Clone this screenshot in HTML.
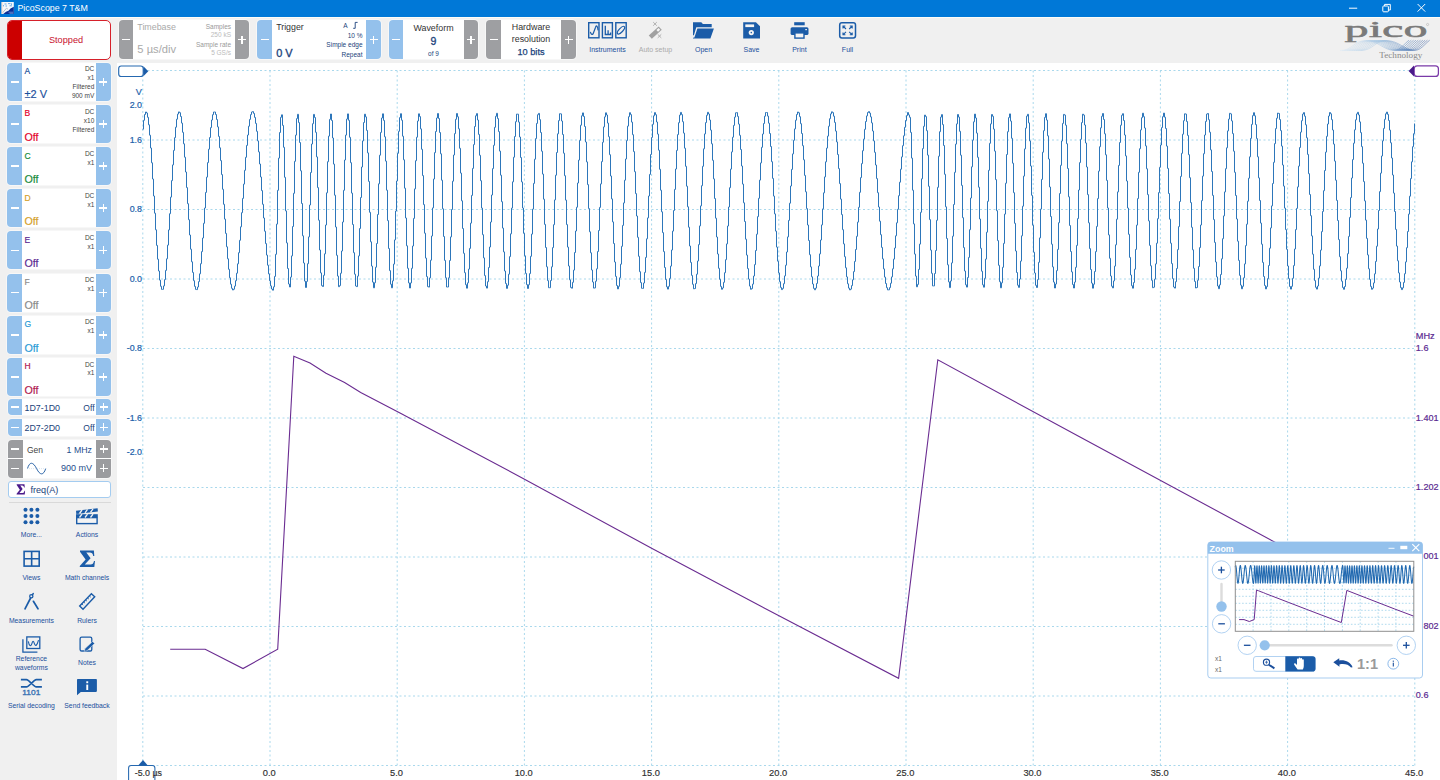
<!DOCTYPE html>
<html><head><meta charset="utf-8"><title>PicoScope 7 T&amp;M</title>
<style>
html,body{margin:0;padding:0;}
body{width:1440px;height:780px;overflow:hidden;background:#fff;position:relative;font-family:"Liberation Sans",sans-serif;}
.abs{position:absolute;}
.t{position:absolute;white-space:nowrap;line-height:1;}
.tc{transform:translateX(-50%);}
.tr{transform:translateX(-100%);}
#titlebar{left:0;top:0;width:1440px;height:17px;background:#0078d7;}
#toolbar{left:0;top:17px;width:1440px;height:46px;background:#f0f0f0;}
#leftbar{left:0;top:63px;width:117px;height:717px;background:#f0f0f0;}
.pn{position:absolute;background:#fff;border-radius:4px;overflow:hidden;box-shadow:0 0 0 0.8px #f9f9f9;}
.bt{position:absolute;top:0;bottom:0;}
.bl{background:#94c1ec;}
.gr{background:#9e9fa2;}
.mi,.pl{position:absolute;background:#fff;}
svg{position:absolute;left:0;top:0;}
</style></head><body>
<div id="titlebar" class="abs"></div>
<div id="toolbar" class="abs"></div><div class="abs" style="left:0;top:17px;width:1440px;height:1.4px;background:#fcfcf8"></div>
<div id="leftbar" class="abs"></div>
<div class="abs" style="left:7.2px;top:19.8px;width:102px;height:38px;border:1px solid #d6202a;border-radius:5px;background:#fff;overflow:hidden;box-sizing:content-box"><div class="abs" style="left:0;top:0;width:14px;height:38px;background:#cc0000"></div></div>
<div class="pn" style="left:118.5px;top:20.1px;width:130.5px;height:39.1px;"><div class="bt gr" style="left:0;width:14.5px"><div class="mi" style="left:3.2px;top:18.8px;width:8px;height:1.6px"></div></div><div class="bt gr" style="right:0;width:14.5px"><div class="mi" style="left:3.2px;top:18.8px;width:8px;height:1.6px"></div><div class="pl" style="left:6.5px;top:15.6px;width:1.6px;height:8px"></div></div></div>
<div class="pn" style="left:257.0px;top:20.1px;width:124.0px;height:39.1px;"><div class="bt bl" style="left:0;width:15.0px"><div class="mi" style="left:3.5px;top:18.8px;width:8px;height:1.6px"></div></div><div class="bt bl" style="right:0;width:15.0px"><div class="mi" style="left:3.5px;top:18.8px;width:8px;height:1.6px"></div><div class="pl" style="left:6.7px;top:15.6px;width:1.6px;height:8px"></div></div></div>
<div class="pn" style="left:388.5px;top:20.1px;width:89.5px;height:39.1px;"><div class="bt bl" style="left:0;width:14.5px"><div class="mi" style="left:3.2px;top:18.8px;width:8px;height:1.6px"></div></div><div class="bt gr" style="right:0;width:14.0px"><div class="mi" style="left:3.0px;top:18.8px;width:8px;height:1.6px"></div><div class="pl" style="left:6.2px;top:15.6px;width:1.6px;height:8px"></div></div></div>
<div class="pn" style="left:486.0px;top:20.1px;width:90.0px;height:39.1px;"><div class="bt gr" style="left:0;width:15.0px"><div class="mi" style="left:3.5px;top:18.8px;width:8px;height:1.6px"></div></div><div class="bt gr" style="right:0;width:15.0px"><div class="mi" style="left:3.5px;top:18.8px;width:8px;height:1.6px"></div><div class="pl" style="left:6.7px;top:15.6px;width:1.6px;height:8px"></div></div></div>
<div class="pn" style="left:7.3px;top:62.8px;width:103.7px;height:38.1px;"><div class="bt bl" style="left:0;width:14.6px"><div class="mi" style="left:3.3px;top:18.3px;width:8px;height:1.6px"></div></div><div class="bt bl" style="right:0;width:15.0px"><div class="mi" style="left:3.5px;top:18.3px;width:8px;height:1.6px"></div><div class="pl" style="left:6.7px;top:15.1px;width:1.6px;height:8px"></div></div></div>
<div class="pn" style="left:7.3px;top:104.9px;width:103.7px;height:38.1px;"><div class="bt bl" style="left:0;width:14.6px"><div class="mi" style="left:3.3px;top:18.2px;width:8px;height:1.6px"></div></div><div class="bt bl" style="right:0;width:15.0px"><div class="mi" style="left:3.5px;top:18.2px;width:8px;height:1.6px"></div><div class="pl" style="left:6.7px;top:15.0px;width:1.6px;height:8px"></div></div></div>
<div class="pn" style="left:7.3px;top:147.1px;width:103.7px;height:38.1px;"><div class="bt bl" style="left:0;width:14.6px"><div class="mi" style="left:3.3px;top:18.2px;width:8px;height:1.6px"></div></div><div class="bt bl" style="right:0;width:15.0px"><div class="mi" style="left:3.5px;top:18.2px;width:8px;height:1.6px"></div><div class="pl" style="left:6.7px;top:15.0px;width:1.6px;height:8px"></div></div></div>
<div class="pn" style="left:7.3px;top:189.2px;width:103.7px;height:38.1px;"><div class="bt bl" style="left:0;width:14.6px"><div class="mi" style="left:3.3px;top:18.2px;width:8px;height:1.6px"></div></div><div class="bt bl" style="right:0;width:15.0px"><div class="mi" style="left:3.5px;top:18.2px;width:8px;height:1.6px"></div><div class="pl" style="left:6.7px;top:15.0px;width:1.6px;height:8px"></div></div></div>
<div class="pn" style="left:7.3px;top:231.4px;width:103.7px;height:38.1px;"><div class="bt bl" style="left:0;width:14.6px"><div class="mi" style="left:3.3px;top:18.3px;width:8px;height:1.6px"></div></div><div class="bt bl" style="right:0;width:15.0px"><div class="mi" style="left:3.5px;top:18.3px;width:8px;height:1.6px"></div><div class="pl" style="left:6.7px;top:15.1px;width:1.6px;height:8px"></div></div></div>
<div class="pn" style="left:7.3px;top:273.6px;width:103.7px;height:38.1px;"><div class="bt bl" style="left:0;width:14.6px"><div class="mi" style="left:3.3px;top:18.3px;width:8px;height:1.6px"></div></div><div class="bt bl" style="right:0;width:15.0px"><div class="mi" style="left:3.5px;top:18.3px;width:8px;height:1.6px"></div><div class="pl" style="left:6.7px;top:15.1px;width:1.6px;height:8px"></div></div></div>
<div class="pn" style="left:7.3px;top:315.7px;width:103.7px;height:38.1px;"><div class="bt bl" style="left:0;width:14.6px"><div class="mi" style="left:3.3px;top:18.3px;width:8px;height:1.6px"></div></div><div class="bt bl" style="right:0;width:15.0px"><div class="mi" style="left:3.5px;top:18.3px;width:8px;height:1.6px"></div><div class="pl" style="left:6.7px;top:15.1px;width:1.6px;height:8px"></div></div></div>
<div class="pn" style="left:7.3px;top:357.9px;width:103.7px;height:38.1px;"><div class="bt bl" style="left:0;width:14.6px"><div class="mi" style="left:3.3px;top:18.3px;width:8px;height:1.6px"></div></div><div class="bt bl" style="right:0;width:15.0px"><div class="mi" style="left:3.5px;top:18.3px;width:8px;height:1.6px"></div><div class="pl" style="left:6.7px;top:15.1px;width:1.6px;height:8px"></div></div></div>
<div class="pn" style="left:7.5px;top:398.9px;width:103.5px;height:16.5px;"><div class="bt bl" style="left:0;width:14.6px"><div class="mi" style="left:3.3px;top:7.5px;width:8px;height:1.6px"></div></div><div class="bt bl" style="right:0;width:15.0px"><div class="mi" style="left:3.5px;top:7.5px;width:8px;height:1.6px"></div><div class="pl" style="left:6.7px;top:4.2px;width:1.6px;height:8px"></div></div></div>
<div class="pn" style="left:7.5px;top:419.2px;width:103.5px;height:16.5px;"><div class="bt bl" style="left:0;width:14.6px"><div class="mi" style="left:3.3px;top:7.5px;width:8px;height:1.6px"></div></div><div class="bt bl" style="right:0;width:15.0px"><div class="mi" style="left:3.5px;top:7.5px;width:8px;height:1.6px"></div><div class="pl" style="left:6.7px;top:4.2px;width:1.6px;height:8px"></div></div></div>
<div class="pn" style="left:7.5px;top:439.5px;width:103.5px;height:38.5px;"></div>
<div class="abs" style="left:7.5px;top:439.5px;width:15px;height:18.7px;background:#9b9c9f;border-radius:4px 0 0 0"><div class="mi" style="left:3.5px;top:8.5px;width:8px;height:1.6px"></div></div>
<div class="abs" style="left:7.5px;top:458.8px;width:15px;height:19.2px;background:#9b9c9f;border-radius:0 0 0 4px"><div class="mi" style="left:3.5px;top:8.8px;width:8px;height:1.6px"></div></div>
<div class="abs" style="left:96px;top:439.5px;width:15px;height:18.7px;background:#9b9c9f;border-radius:0 4px 0 0"><div class="mi" style="left:3.5px;top:8.5px;width:8px;height:1.6px"></div><div class="pl" style="left:6.7px;top:5.3px;width:1.6px;height:8px"></div></div>
<div class="abs" style="left:96px;top:458.8px;width:15px;height:19.2px;background:#9b9c9f;border-radius:0 0 4px 0"><div class="mi" style="left:3.5px;top:8.8px;width:8px;height:1.6px"></div><div class="pl" style="left:6.7px;top:5.6px;width:1.6px;height:8px"></div></div>
<div class="abs" style="left:7.5px;top:481.2px;width:101.5px;height:14.8px;border:1px solid #a4ccf0;border-radius:3px;background:#fff"></div>
<div class="abs" style="left:9px;top:502px;width:102px;height:1px;background:#d9d9d9"></div>
<svg width="1440" height="780" viewBox="0 0 1440 780">

<g id="plotcore">
 <g stroke="#a9d8ec" stroke-width="1" stroke-dasharray="2 2.5" fill="none"><line x1="142.8" y1="70.5" x2="142.8" y2="765.5"/><line x1="270.0" y1="70.5" x2="270.0" y2="765.5"/><line x1="397.2" y1="70.5" x2="397.2" y2="765.5"/><line x1="524.4" y1="70.5" x2="524.4" y2="765.5"/><line x1="651.6" y1="70.5" x2="651.6" y2="765.5"/><line x1="778.8" y1="70.5" x2="778.8" y2="765.5"/><line x1="906.0" y1="70.5" x2="906.0" y2="765.5"/><line x1="1033.2" y1="70.5" x2="1033.2" y2="765.5"/><line x1="1160.4" y1="70.5" x2="1160.4" y2="765.5"/><line x1="1287.6" y1="70.5" x2="1287.6" y2="765.5"/><line x1="1414.8" y1="70.5" x2="1414.8" y2="765.5"/><line x1="143" y1="70.5" x2="1415" y2="70.5"/><line x1="143" y1="140.0" x2="1415" y2="140.0"/><line x1="143" y1="209.5" x2="1415" y2="209.5"/><line x1="143" y1="279.0" x2="1415" y2="279.0"/><line x1="143" y1="348.5" x2="1415" y2="348.5"/><line x1="143" y1="418.0" x2="1415" y2="418.0"/><line x1="143" y1="487.5" x2="1415" y2="487.5"/><line x1="143" y1="557.0" x2="1415" y2="557.0"/><line x1="143" y1="626.5" x2="1415" y2="626.5"/><line x1="143" y1="696.0" x2="1415" y2="696.0"/><line x1="143" y1="765.5" x2="1415" y2="765.5"/></g>
 <path d="M142.5 129.2H143.5 V120.3H144.5 V114.5H145.5 V112.0H146.5 V113.0H147.5 V117.3H148.5 V124.8H149.5 V135.2H150.5 V148.0H151.5 V162.8H152.5 V179.0H153.5 V196.0H154.5 V213.2H155.5 V229.8H156.5 V245.4H157.5 V259.2H158.5 V271.0H159.5 V280.1H160.5 V286.3H161.5 V289.4H162.5 V289.3H163.5 V285.9H164.5 V279.6H165.5 V270.4H166.5 V258.8H167.5 V245.1H168.5 V229.9H169.5 V213.7H170.5 V197.1H171.5 V180.6H172.5 V164.9H173.5 V150.4H174.5 V137.7H175.5 V127.2H176.5 V119.2H177.5 V114.1H178.5 V111.9H179.5 V112.7H180.5 V116.5H181.5 V123.1H182.5 V132.3H183.5 V143.8H184.5 V157.2H185.5 V172.0H186.5 V187.6H187.5 V203.7H188.5 V219.7H189.5 V235.0H190.5 V249.2H191.5 V261.8H192.5 V272.4H193.5 V280.7H194.5 V286.4H195.5 V289.4H196.5 V289.6H197.5 V287.0H198.5 V281.6H199.5 V273.8H200.5 V263.7H201.5 V251.6H202.5 V238.0H203.5 V223.3H204.5 V208.0H205.5 V192.4H206.5 V177.1H207.5 V162.6H208.5 V149.2H209.5 V137.5H210.5 V127.6H211.5 V120.0H212.5 V114.7H213.5 V112.0H214.5 V112.0H215.5 V114.5H216.5 V119.5H217.5 V126.9H218.5 V136.4H219.5 V147.8H220.5 V160.6H221.5 V174.6H222.5 V189.3H223.5 V204.3H224.5 V219.1H225.5 V233.4H226.5 V246.8H227.5 V258.8H228.5 V269.3H229.5 V277.8H230.5 V284.2H231.5 V288.3H232.5 V290.0H233.5 V289.2H234.5 V286.1H235.5 V280.7H236.5 V273.2H237.5 V263.8H238.5 V252.7H239.5 V240.3H240.5 V226.8H241.5 V212.7H242.5 V198.4H243.5 V184.1H244.5 V170.3H245.5 V157.3H246.5 V145.4H247.5 V135.0H248.5 V126.2H249.5 V119.4H250.5 V114.6H251.5 V112.0H252.5 V111.6H253.5 V113.4H254.5 V117.4H255.5 V123.4H256.5 V131.3H257.5 V140.9H258.5 V151.9H259.5 V164.0H260.5 V177.0H261.5 V190.6H262.5 V204.3H263.5 V218.0H264.5 V231.2H265.5 V243.6H266.5 V255.1H267.5 V265.2H268.5 V273.9H269.5 V280.8H270.5 V285.9H271.5 V289.0H272.5 V290.2H273.5 V286.8H274.5 V276.4H275.5 V254.3H276.5 V224.1H277.5 V190.3H278.5 V158.1H279.5 V132.5H280.5 V117.3H281.5 V114.8H282.5 V125.4H283.5 V147.3H284.5 V177.3H285.5 V210.9H286.5 V242.9H287.5 V268.5H288.5 V284.0H289.5 V287.0H290.5 V277.1H291.5 V255.9H292.5 V226.5H293.5 V193.3H294.5 V161.3H295.5 V135.1H296.5 V118.6H297.5 V114.3H298.5 V122.6H299.5 V142.5H300.5 V170.8H301.5 V203.5H302.5 V235.8H303.5 V263.0H304.5 V281.1H305.5 V287.5H306.5 V281.4H307.5 V263.7H308.5 V236.9H309.5 V205.0H310.5 V172.5H311.5 V144.0H312.5 V123.7H313.5 V114.4H314.5 V117.5H315.5 V132.3H316.5 V156.9H317.5 V187.6H318.5 V220.2H319.5 V250.0H320.5 V272.9H321.5 V285.6H322.5 V286.5H323.5 V275.3H324.5 V253.8H325.5 V225.0H326.5 V192.8H327.5 V161.7H328.5 V136.1H329.5 V119.4H330.5 V114.0H331.5 V120.5H332.5 V138.0H333.5 V164.1H334.5 V195.2H335.5 V227.0H336.5 V255.3H337.5 V276.1H338.5 V286.7H339.5 V285.6H340.5 V273.2H341.5 V251.0H342.5 V222.0H343.5 V190.3H344.5 V160.0H345.5 V135.1H346.5 V119.1H347.5 V113.9H348.5 V120.3H349.5 V137.3H350.5 V162.7H351.5 V193.1H352.5 V224.5H353.5 V252.7H354.5 V274.2H355.5 V286.0H356.5 V286.6H357.5 V276.1H358.5 V255.9H359.5 V228.5H360.5 V197.5H361.5 V167.0H362.5 V140.9H363.5 V122.5H364.5 V114.2H365.5 V116.9H366.5 V130.4H367.5 V152.9H368.5 V181.4H369.5 V212.3H370.5 V241.8H371.5 V266.1H372.5 V282.1H373.5 V287.8H374.5 V282.7H375.5 V267.2H376.5 V243.5H377.5 V214.5H378.5 V183.8H379.5 V155.2H380.5 V132.4H381.5 V118.0H382.5 V113.8H383.5 V120.4H384.5 V136.8H385.5 V161.1H386.5 V190.2H387.5 V220.6H388.5 V248.5H389.5 V270.6H390.5 V284.2H391.5 V287.8H392.5 V280.8H393.5 V264.1H394.5 V239.9H395.5 V211.0H396.5 V181.0H397.5 V153.3H398.5 V131.3H399.5 V117.6H400.5 V113.7H401.5 V120.2H402.5 V136.2H403.5 V159.8H404.5 V188.2H405.5 V218.0H406.5 V245.8H407.5 V268.3H408.5 V282.9H409.5 V288.0H410.5 V282.9H411.5 V268.3H412.5 V246.0H413.5 V218.4H414.5 V188.9H415.5 V160.7H416.5 V137.2H417.5 V121.0H418.5 V113.8H419.5 V116.6H420.5 V128.9H421.5 V149.3H422.5 V175.6H423.5 V204.6H424.5 V233.2H425.5 V258.1H426.5 V276.6H427.5 V286.6H428.5 V287.1H429.5 V277.9H430.5 V260.2H431.5 V236.0H432.5 V207.9H433.5 V179.0H434.5 V152.6H435.5 V131.5H436.5 V118.0H437.5 V113.5H438.5 V118.5H439.5 V132.5H440.5 V153.8H441.5 V180.2H442.5 V208.8H443.5 V236.5H444.5 V260.4H445.5 V277.8H446.5 V287.0H447.5 V287.0H448.5 V277.8H449.5 V260.5H450.5 V236.9H451.5 V209.5H452.5 V181.2H453.5 V155.0H454.5 V133.6H455.5 V119.3H456.5 V113.5H457.5 V116.8H458.5 V128.8H459.5 V148.3H460.5 V173.1H461.5 V200.8H462.5 V228.5H463.5 V253.3H464.5 V272.7H465.5 V284.7H466.5 V288.2H467.5 V282.8H468.5 V269.1H469.5 V248.4H470.5 V223.1H471.5 V195.4H472.5 V168.4H473.5 V144.6H474.5 V126.5H475.5 V115.8H476.5 V113.6H477.5 V120.0H478.5 V134.4H479.5 V155.3H480.5 V180.7H481.5 V208.1H482.5 V234.7H483.5 V257.9H484.5 V275.6H485.5 V286.0H486.5 V288.1H487.5 V281.7H488.5 V267.5H489.5 V247.0H490.5 V222.0H491.5 V195.0H492.5 V168.6H493.5 V145.3H494.5 V127.3H495.5 V116.3H496.5 V113.3H497.5 V118.6H498.5 V131.6H499.5 V151.1H500.5 V175.2H501.5 V201.7H502.5 V228.1H503.5 V251.9H504.5 V271.0H505.5 V283.5H506.5 V288.4H507.5 V285.2H508.5 V274.2H509.5 V256.6H510.5 V233.8H511.5 V208.1H512.5 V181.8H513.5 V157.2H514.5 V136.5H515.5 V121.7H516.5 V114.1H517.5 V114.2H518.5 V122.1H519.5 V137.0H520.5 V157.5H521.5 V181.9H522.5 V208.0H523.5 V233.3H524.5 V255.8H525.5 V273.4H526.5 V284.6H527.5 V288.5H528.5 V284.7H529.5 V273.6H530.5 V256.3H531.5 V234.1H532.5 V209.1H533.5 V183.4H534.5 V159.2H535.5 V138.6H536.5 V123.4H537.5 V114.7H538.5 V113.4H539.5 V119.6H540.5 V132.5H541.5 V151.2H542.5 V174.1H543.5 V199.2H544.5 V224.4H545.5 V247.5H546.5 V266.8H547.5 V280.6H548.5 V287.7H549.5 V287.7H550.5 V280.5H551.5 V266.8H552.5 V247.6H553.5 V224.7H554.5 V199.9H555.5 V175.2H556.5 V152.5H557.5 V133.8H558.5 V120.6H559.5 V113.7H560.5 V113.9H561.5 V121.0H562.5 V134.5H563.5 V153.2H564.5 V175.7H565.5 V200.1H566.5 V224.6H567.5 V247.1H568.5 V266.0H569.5 V279.8H570.5 V287.4H571.5 V288.2H572.5 V282.3H573.5 V270.1H574.5 V252.5H575.5 V231.0H576.5 V207.2H577.5 V183.0H578.5 V160.1H579.5 V140.4H580.5 V125.2H581.5 V115.8H582.5 V112.9H583.5 V116.5H584.5 V126.5H585.5 V142.0H586.5 V161.9H587.5 V184.6H588.5 V208.5H589.5 V231.8H590.5 V252.8H591.5 V270.0H592.5 V282.0H593.5 V288.1H594.5 V287.9H595.5 V281.2H596.5 V268.8H597.5 V251.5H598.5 V230.5H599.5 V207.4H600.5 V183.9H601.5 V161.6H602.5 V142.2H603.5 V126.9H604.5 V116.9H605.5 V112.8H606.5 V115.0H607.5 V123.1H608.5 V136.7H609.5 V154.7H610.5 V176.0H611.5 V198.9H612.5 V221.9H613.5 V243.5H614.5 V262.0H615.5 V276.4H616.5 V285.5H617.5 V288.9H618.5 V286.3H619.5 V277.8H620.5 V264.2H621.5 V246.3H622.5 V225.4H623.5 V202.9H624.5 V180.2H625.5 V159.0H626.5 V140.6H627.5 V126.1H628.5 V116.7H629.5 V112.7H630.5 V114.6H631.5 V122.1H632.5 V134.7H633.5 V151.6H634.5 V171.7H635.5 V193.6H636.5 V216.0H637.5 V237.3H638.5 V256.3H639.5 V271.7H640.5 V282.6H641.5 V288.3H642.5 V288.4H643.5 V283.0H644.5 V272.4H645.5 V257.4H646.5 V238.8H647.5 V217.9H648.5 V196.0H649.5 V174.4H650.5 V154.5H651.5 V137.4H652.5 V124.3H653.5 V115.8H654.5 V112.6H655.5 V114.7H656.5 V122.0H657.5 V134.1H658.5 V150.2H659.5 V169.3H660.5 V190.2H661.5 V211.8H662.5 V232.6H663.5 V251.6H664.5 V267.5H665.5 V279.5H666.5 V286.8H667.5 V289.1H668.5 V286.3H669.5 V278.4H670.5 V266.1H671.5 V250.0H672.5 V231.1H673.5 V210.5H674.5 V189.4H675.5 V169.0H676.5 V150.4H677.5 V134.6H678.5 V122.7H679.5 V115.1H680.5 V112.4H681.5 V114.6H682.5 V121.7H683.5 V133.1H684.5 V148.2H685.5 V166.3H686.5 V186.2H687.5 V206.8H688.5 V227.2H689.5 V246.0H690.5 V262.4H691.5 V275.4H692.5 V284.3H693.5 V288.8H694.5 V288.5H695.5 V283.6H696.5 V274.2H697.5 V261.0H698.5 V244.6H699.5 V225.9H700.5 V205.9H701.5 V185.7H702.5 V166.3H703.5 V148.8H704.5 V133.9H705.5 V122.6H706.5 V115.3H707.5 V112.3H708.5 V114.0H709.5 V120.0H710.5 V130.1H711.5 V143.8H712.5 V160.3H713.5 V178.9H714.5 V198.5H715.5 V218.2H716.5 V237.0H717.5 V254.0H718.5 V268.3H719.5 V279.3H720.5 V286.4H721.5 V289.3H722.5 V287.9H723.5 V282.3H724.5 V272.7H725.5 V259.7H726.5 V243.9H727.5 V226.0H728.5 V207.0H729.5 V187.7H730.5 V169.1H731.5 V151.9H732.5 V137.2H733.5 V125.4H734.5 V117.1H735.5 V112.8H736.5 V112.6H737.5 V116.4H738.5 V124.1H739.5 V135.3H740.5 V149.5H741.5 V166.0H742.5 V184.1H743.5 V202.8H744.5 V221.5H745.5 V239.2H746.5 V255.1H747.5 V268.6H748.5 V279.1H749.5 V286.1H750.5 V289.3H751.5 V288.6H752.5 V284.1H753.5 V276.0H754.5 V264.6H755.5 V250.5H756.5 V234.2H757.5 V216.6H758.5 V198.3H759.5 V180.1H760.5 V162.9H761.5 V147.3H762.5 V134.0H763.5 V123.5H764.5 V116.2H765.5 V112.5H766.5 V112.5H767.5 V116.1H768.5 V123.2H769.5 V133.5H770.5 V146.5H771.5 V161.7H772.5 V178.4H773.5 V196.1H774.5 V213.9H775.5 V231.1H776.5 V247.1H777.5 V261.2H778.5 V272.9H779.5 V281.7H780.5 V287.4H781.5 V289.6H782.5 V288.4H783.5 V283.7H784.5 V275.9H785.5 V265.2H786.5 V252.0H787.5 V236.9H788.5 V220.4H789.5 V203.2H790.5 V186.0H791.5 V169.4H792.5 V153.9H793.5 V140.3H794.5 V128.9H795.5 V120.2H796.5 V114.5H797.5 V112.0H798.5 V112.8H799.5 V116.7H800.5 V123.7H801.5 V133.5H802.5 V145.7H803.5 V159.8H804.5 V175.4H805.5 V191.8H806.5 V208.6H807.5 V225.0H808.5 V240.5H809.5 V254.7H810.5 V266.9H811.5 V276.8H812.5 V284.0H813.5 V288.4H814.5 V289.8H815.5 V288.1H816.5 V283.4H817.5 V276.0H818.5 V266.0H819.5 V253.9H820.5 V240.0H821.5 V224.9H822.5 V208.9H823.5 V192.8H824.5 V176.9H825.5 V161.8H826.5 V148.1H827.5 V136.1H828.5 V126.2H829.5 V118.7H830.5 V113.9H831.5 V111.8H832.5 V112.6H833.5 V116.2H834.5 V122.4H835.5 V131.1H836.5 V141.9H837.5 V154.5H838.5 V168.6H839.5 V183.6H840.5 V199.1H841.5 V214.6H842.5 V229.7H843.5 V243.9H844.5 V256.7H845.5 V267.8H846.5 V276.9H847.5 V283.8H848.5 V288.1H849.5 V289.9H850.5 V289.1H851.5 V285.6H852.5 V279.8H853.5 V271.6H854.5 V261.4H855.5 V249.5H856.5 V236.3H857.5 V222.1H858.5 V207.3H859.5 V192.3H860.5 V177.6H861.5 V163.6H862.5 V150.7H863.5 V139.1H864.5 V129.3H865.5 V121.5H866.5 V115.9H867.5 V112.5H868.5 V111.6H869.5 V113.1H870.5 V116.9H871.5 V122.9H872.5 V131.0H873.5 V140.9H874.5 V152.3H875.5 V165.0H876.5 V178.6H877.5 V192.7H878.5 V207.0H879.5 V221.2H880.5 V234.7H881.5 V247.4H882.5 V258.9H883.5 V268.9H884.5 V277.1H885.5 V283.5H886.5 V287.7H887.5 V289.9H888.5 V289.8H889.5 V287.6H890.5 V283.2H891.5 V276.9H892.5 V268.8H893.5 V259.1H894.5 V248.0H895.5 V235.8H896.5 V222.8H897.5 V209.3H898.5 V195.7H899.5 V182.2H900.5 V169.2H901.5 V156.9H902.5 V145.7H903.5 V135.8H904.5 V127.3H905.5 V120.5H906.5 V115.6H907.5 V112.5H908.5 V114.9H909.5 V117.3H910.5 V132.4H911.5 V158.1H912.5 V190.2H913.5 V223.9H914.5 V254.1H915.5 V276.1H916.5 V286.8H917.5 V284.4H918.5 V269.4H919.5 V244.1H920.5 V212.3H921.5 V178.8H922.5 V148.6H923.5 V126.3H924.5 V115.1H925.5 V116.6H926.5 V130.7H927.5 V155.1H928.5 V186.3H929.5 V219.6H930.5 V250.1H931.5 V273.3H932.5 V285.9H933.5 V285.9H934.5 V273.5H935.5 V250.5H936.5 V220.3H937.5 V187.3H938.5 V156.2H939.5 V131.7H940.5 V117.1H941.5 V114.6H942.5 V124.6H943.5 V145.5H944.5 V174.3H945.5 V206.8H946.5 V238.5H947.5 V264.8H948.5 V281.9H949.5 V287.6H950.5 V280.9H951.5 V262.9H952.5 V236.2H953.5 V204.5H954.5 V172.3H955.5 V144.1H956.5 V123.9H957.5 V114.5H958.5 V117.1H959.5 V131.3H960.5 V155.2H961.5 V185.4H962.5 V217.7H963.5 V247.6H964.5 V271.0H965.5 V284.8H966.5 V287.1H967.5 V277.5H968.5 V257.4H969.5 V229.7H970.5 V198.0H971.5 V166.8H972.5 V140.2H973.5 V121.8H974.5 V114.1H975.5 V118.0H976.5 V133.1H977.5 V157.3H978.5 V187.2H979.5 V219.0H980.5 V248.3H981.5 V271.2H982.5 V284.8H983.5 V287.2H984.5 V278.3H985.5 V259.1H986.5 V232.2H987.5 V201.3H988.5 V170.3H989.5 V143.3H990.5 V123.9H991.5 V114.5H992.5 V116.3H993.5 V129.1H994.5 V151.1H995.5 V179.6H996.5 V210.7H997.5 V240.6H998.5 V265.3H999.5 V281.7H1000.5 V287.8H1001.5 V282.8H1002.5 V267.3H1003.5 V243.4H1004.5 V214.1H1005.5 V183.2H1006.5 V154.5H1007.5 V131.7H1008.5 V117.6H1009.5 V113.9H1010.5 V121.1H1011.5 V138.3H1012.5 V163.2H1013.5 V192.7H1014.5 V223.3H1015.5 V251.0H1016.5 V272.5H1017.5 V285.2H1018.5 V287.4H1019.5 V279.0H1020.5 V261.1H1021.5 V235.8H1022.5 V206.2H1023.5 V176.1H1024.5 V148.9H1025.5 V128.1H1026.5 V116.1H1027.5 V114.3H1028.5 V122.9H1029.5 V140.9H1030.5 V166.0H1031.5 V195.3H1032.5 V225.2H1033.5 V252.2H1034.5 V273.0H1035.5 V285.3H1036.5 V287.5H1037.5 V279.6H1038.5 V262.3H1039.5 V237.9H1040.5 V209.1H1041.5 V179.4H1042.5 V152.2H1043.5 V130.7H1044.5 V117.4H1045.5 V113.7H1046.5 V120.1H1047.5 V135.8H1048.5 V159.0H1049.5 V187.0H1050.5 V216.5H1051.5 V244.2H1052.5 V266.9H1053.5 V282.1H1054.5 V288.0H1055.5 V284.0H1056.5 V270.6H1057.5 V249.4H1058.5 V222.7H1059.5 V193.5H1060.5 V165.3H1061.5 V141.0H1062.5 V123.4H1063.5 V114.4H1064.5 V115.1H1065.5 V125.2H1066.5 V143.7H1067.5 V168.5H1068.5 V196.8H1069.5 V225.5H1070.5 V251.5H1071.5 V271.9H1072.5 V284.5H1073.5 V288.0H1074.5 V282.1H1075.5 V267.3H1076.5 V245.4H1077.5 V218.6H1078.5 V190.0H1079.5 V162.6H1080.5 V139.3H1081.5 V122.6H1082.5 V114.2H1083.5 V115.1H1084.5 V125.0H1085.5 V143.0H1086.5 V167.0H1087.5 V194.6H1088.5 V222.8H1089.5 V248.6H1090.5 V269.5H1091.5 V283.1H1092.5 V288.2H1093.5 V284.2H1094.5 V271.5H1095.5 V251.6H1096.5 V226.4H1097.5 V198.6H1098.5 V171.1H1099.5 V146.7H1100.5 V127.8H1101.5 V116.3H1102.5 V113.5H1103.5 V119.5H1104.5 V133.8H1105.5 V154.8H1106.5 V180.4H1107.5 V208.0H1108.5 V234.9H1109.5 V258.3H1110.5 V276.0H1111.5 V286.2H1112.5 V287.9H1113.5 V280.9H1114.5 V266.1H1115.5 V244.8H1116.5 V219.2H1117.5 V191.9H1118.5 V165.4H1119.5 V142.5H1120.5 V125.2H1121.5 V115.3H1122.5 V113.7H1123.5 V120.5H1124.5 V135.0H1125.5 V155.9H1126.5 V181.0H1127.5 V208.0H1128.5 V234.3H1129.5 V257.4H1130.5 V275.0H1131.5 V285.7H1132.5 V288.2H1133.5 V282.5H1134.5 V269.2H1135.5 V249.4H1136.5 V225.1H1137.5 V198.6H1138.5 V172.3H1139.5 V148.7H1140.5 V129.9H1141.5 V117.7H1142.5 V113.2H1143.5 V116.7H1144.5 V128.0H1145.5 V145.9H1146.5 V168.8H1147.5 V194.6H1148.5 V220.9H1149.5 V245.4H1150.5 V265.8H1151.5 V280.3H1152.5 V287.7H1153.5 V287.2H1154.5 V279.1H1155.5 V263.9H1156.5 V243.2H1157.5 V218.7H1158.5 V192.6H1159.5 V167.3H1160.5 V145.0H1161.5 V127.6H1162.5 V116.7H1163.5 V113.1H1164.5 V117.2H1165.5 V128.5H1166.5 V146.1H1167.5 V168.4H1168.5 V193.5H1169.5 V219.2H1170.5 V243.2H1171.5 V263.6H1172.5 V278.7H1173.5 V287.0H1174.5 V288.1H1175.5 V281.7H1176.5 V268.5H1177.5 V249.6H1178.5 V226.6H1179.5 V201.5H1180.5 V176.4H1181.5 V153.3H1182.5 V134.2H1183.5 V120.7H1184.5 V113.8H1185.5 V114.1H1186.5 V121.5H1187.5 V135.4H1188.5 V154.7H1189.5 V177.7H1190.5 V202.6H1191.5 V227.3H1192.5 V249.8H1193.5 V268.3H1194.5 V281.4H1195.5 V288.0H1196.5 V287.5H1197.5 V280.2H1198.5 V266.5H1199.5 V247.6H1200.5 V225.0H1201.5 V200.6H1202.5 V176.1H1203.5 V153.7H1204.5 V135.0H1205.5 V121.4H1206.5 V114.1H1207.5 V113.5H1208.5 V119.7H1209.5 V132.2H1210.5 V149.9H1211.5 V171.5H1212.5 V195.4H1213.5 V219.6H1214.5 V242.4H1215.5 V262.0H1216.5 V276.9H1217.5 V286.0H1218.5 V288.7H1219.5 V284.8H1220.5 V274.5H1221.5 V258.8H1222.5 V238.7H1223.5 V215.9H1224.5 V191.9H1225.5 V168.7H1226.5 V147.8H1227.5 V130.9H1228.5 V119.1H1229.5 V113.3H1230.5 V113.9H1231.5 V120.9H1232.5 V133.6H1233.5 V151.2H1234.5 V172.3H1235.5 V195.5H1236.5 V219.0H1237.5 V241.2H1238.5 V260.4H1239.5 V275.4H1240.5 V285.1H1241.5 V288.8H1242.5 V286.3H1243.5 V277.8H1244.5 V263.9H1245.5 V245.6H1246.5 V224.2H1247.5 V201.2H1248.5 V178.2H1249.5 V156.8H1250.5 V138.4H1251.5 V124.4H1252.5 V115.6H1253.5 V112.7H1254.5 V115.8H1255.5 V124.6H1256.5 V138.6H1257.5 V156.8H1258.5 V177.9H1259.5 V200.5H1260.5 V223.1H1261.5 V244.2H1262.5 V262.4H1263.5 V276.5H1264.5 V285.5H1265.5 V288.9H1266.5 V286.6H1267.5 V278.6H1268.5 V265.5H1269.5 V248.2H1270.5 V227.9H1271.5 V205.9H1272.5 V183.5H1273.5 V162.3H1274.5 V143.6H1275.5 V128.6H1276.5 V118.2H1277.5 V113.1H1278.5 V113.5H1279.5 V119.5H1280.5 V130.6H1281.5 V146.1H1282.5 V165.0H1283.5 V186.1H1284.5 V208.1H1285.5 V229.6H1286.5 V249.3H1287.5 V266.0H1288.5 V278.6H1289.5 V286.5H1290.5 V289.1H1291.5 V286.3H1292.5 V278.3H1293.5 V265.6H1294.5 V249.0H1295.5 V229.6H1296.5 V208.4H1297.5 V186.9H1298.5 V166.1H1299.5 V147.5H1300.5 V132.1H1301.5 V120.7H1302.5 V114.1H1303.5 V112.6H1304.5 V116.2H1305.5 V124.8H1306.5 V137.8H1307.5 V154.4H1308.5 V173.7H1309.5 V194.5H1310.5 V215.7H1311.5 V235.9H1312.5 V254.2H1313.5 V269.3H1314.5 V280.6H1315.5 V287.3H1316.5 V289.1H1317.5 V286.0H1318.5 V278.1H1319.5 V265.9H1320.5 V250.1H1321.5 V231.6H1322.5 V211.4H1323.5 V190.7H1324.5 V170.5H1325.5 V152.1H1326.5 V136.3H1327.5 V124.0H1328.5 V116.0H1329.5 V112.5H1330.5 V113.8H1331.5 V119.7H1332.5 V130.0H1333.5 V144.1H1334.5 V161.1H1335.5 V180.2H1336.5 V200.4H1337.5 V220.5H1338.5 V239.6H1339.5 V256.7H1340.5 V270.8H1341.5 V281.2H1342.5 V287.5H1343.5 V289.3H1344.5 V286.5H1345.5 V279.4H1346.5 V268.2H1347.5 V253.7H1348.5 V236.4H1349.5 V217.4H1350.5 V197.6H1351.5 V178.0H1352.5 V159.6H1353.5 V143.2H1354.5 V129.8H1355.5 V119.8H1356.5 V113.9H1357.5 V112.3H1358.5 V115.0H1359.5 V121.9H1360.5 V132.6H1361.5 V146.6H1362.5 V163.2H1363.5 V181.6H1364.5 V200.9H1365.5 V220.1H1366.5 V238.4H1367.5 V254.9H1368.5 V268.8H1369.5 V279.4H1370.5 V286.4H1371.5 V289.3H1372.5 V288.1H1373.5 V282.9H1374.5 V273.8H1375.5 V261.4H1376.5 V246.2H1377.5 V229.0H1378.5 V210.5H1379.5 V191.6H1380.5 V173.1H1381.5 V156.0H1382.5 V140.8H1383.5 V128.4H1384.5 V119.3H1385.5 V113.8H1386.5 V112.1H1387.5 V114.4H1388.5 V120.5H1389.5 V130.1H1390.5 V142.8H1391.5 V158.0H1392.5 V175.0H1393.5 V193.1H1394.5 V211.5H1395.5 V229.4H1396.5 V246.1H1397.5 V260.8H1398.5 V272.9H1399.5 V282.0H1400.5 V287.6H1401.5 V289.6H1402.5 V287.8H1403.5 V282.4H1404.5 V273.7H1405.5 V261.9H1406.5 V247.7H1407.5 V231.5H1408.5 V214.1H1409.5 V196.2H1410.5 V178.6H1411.5 V161.8H1412.5 V146.7H1413.5 V133.7H1414.5 V123.5" fill="none" stroke="#2d76ba" stroke-width="1" stroke-linejoin="miter"/>
 <path d="M170.2 649.2 L205.2 649.2 L243.0 668.6 L277.7 649.2 L293.8 356.2 L310.0 363.0 L326.0 373.2 L344.6 382.5 L360.7 392.5 L400.0 413.0 L524.5 479.2 L651.6 548.3 L760.0 605.8 L898.6 678.3 L937.8 359.8 L1080.0 437.0 L1275.0 542.2 L1415.0 616.0" fill="none" stroke="#6a2c91" stroke-width="1.1"/>
</g>
<g><rect x="1.6" y="2" width="12.2" height="12" fill="#f4f8fc"/><path d="M13.8 6.8 L13.8 14 L3.2 14 L6 11.8 L8.5 10.8 L10.5 8.6 Z" fill="#0c2f96"/><path d="M2.2 13.2 L6.5 8.2 L8 9.2" stroke="#9aa6b8" stroke-width="0.7" fill="none"/><path d="M4.5 4 h2 M8 3.6 h2.5 M5.5 6 h1.5 M9.5 5.8 h2.4 M11.5 3.4 v1.5 M3.4 5 v1.4" stroke="#5aa0e0" stroke-width="0.9"/><path d="M8.5 12.2 h4.6 M9.5 13.3 h3.6" stroke="#8db4e8" stroke-width="0.6"/><rect x="1.6" y="2" width="1" height="12" fill="#f8dcc8"/></g>
<g stroke="#fff" stroke-width="1" fill="none"><path d="M1349 8.2 H1357.2"/><rect x="1382.8" y="6" width="5.6" height="5.8" rx="0.8"/><path d="M1384.6 6 V4.4 H1390.3 V10 H1388.6"/><path d="M1417.6 4 L1425.2 11.6 M1425.2 4 L1417.6 11.6"/></g>
<g stroke="#1b5ca8" fill="none" stroke-width="1.4"><rect x="588.7" y="22.7" width="10.3" height="15.1"/><rect x="602.4" y="22.7" width="10" height="15.1"/><rect x="615.8" y="22.7" width="10.4" height="15.1"/><path d="M590.4 31.9 C591 34.8 592.6 35.4 593.4 33 L595.6 27.2 C596.4 24.8 597.6 25.6 598.1 30.4" stroke-width="1.2"/><path d="M605.3 25.7 V34.5 H610.6 V32.6 M608.1 30.2 V34.5" stroke-width="1.3"/><ellipse cx="621" cy="30.2" rx="4.9" ry="1.9" transform="rotate(-47 621 30.2)" stroke-width="1.2"/></g>
<g fill="#a0a0a0" stroke="none"><path d="M648.75 35.4 L658.65 26.4 L661.75 29.8 L651.85 38.8 Z"/><path d="M656.42 29.91 L658.6 27.93 L660.22 29.71 L658.04 31.69Z" fill="#f6f6f6"/></g><g stroke="#a0a0a0" stroke-width="0.8" fill="none"><path d="M653.2 22.1 L656.8 25.7 M656.8 22.1 L653.2 25.7 M657.7 34.3 L661.3 37.9 M661.3 34.3 L657.7 37.9"/></g>
<g fill="#1b5ca8"><path d="M693 22.3 H701.3 L702.9 24 H711.7 V27.2 H696.3 L693.9 35.2 H693 Z"/><path d="M697.4 28.5 H713.9 L710.4 38.5 H693 V37.8 L694.4 37.5 Z"/></g>
<g><path d="M743.2 22.3 H755.9 L760 26.2 V38.5 H743.2 Z" fill="#1b5ca8"/><rect x="745.3" y="24.4" width="8.8" height="2.7" fill="#f4f4f4"/><circle cx="751.3" cy="32.6" r="2.6" fill="#f4f4f4"/><circle cx="751.3" cy="32.6" r="0.8" fill="#1b5ca8"/></g>
<g><rect x="794.2" y="22.2" width="10.5" height="3.1" fill="#1b5ca8"/><rect x="790.6" y="27.2" width="17.9" height="7.8" rx="1.6" fill="#1b5ca8"/><rect x="794.9" y="32.9" width="9.1" height="5.2" fill="#f4f4f4" stroke="#1b5ca8" stroke-width="1.4"/><rect x="805.3" y="29" width="1.6" height="1.2" fill="#f4f4f4"/></g>
<g stroke="#1b5ca8" fill="none"><rect x="839.7" y="22.8" width="15.8" height="15.2" rx="2.2" stroke-width="1.5"/><path d="M846 29 L843 26 M843 28.4 V26 H845.4  M849.2 29 L852.2 26 M849.8 26 H852.2 V28.4  M846 31.8 L843 34.8 M843 32.4 V34.8 H845.4  M849.2 31.8 L852.2 34.8 M849.8 34.8 H852.2 V32.4" stroke-width="1.1"/></g>
<path d="M353.2 28.3 H355.2 V22.4 H357.6" stroke="#1a3f7a" stroke-width="0.9" fill="none"/>
<path d="M27.5 468.6 C29.5 461.5 33 461.5 36.6 468.6 C40 475.6 43.5 475.6 45.7 468.6" stroke="#2a64a8" stroke-width="1" fill="none"/><path d="M27 468.6 H46" stroke="#b7cbe0" stroke-width="0.5" stroke-dasharray="1 1"/>
<g fill="#1b5ca8"><circle cx="25.5" cy="509.7" r="2"/><circle cx="25.5" cy="516" r="2"/><circle cx="25.5" cy="522.3" r="2"/><circle cx="31.4" cy="509.7" r="2"/><circle cx="31.4" cy="516" r="2"/><circle cx="31.4" cy="522.3" r="2"/><circle cx="37.4" cy="509.7" r="2"/><circle cx="37.4" cy="516" r="2"/><circle cx="37.4" cy="522.3" r="2"/></g>
<g><path d="M76 510.7 L97.6 508.3 L97.9 511.4 L76.3 513.9 Z" fill="#1b5ca8"/><rect x="76" y="514.2" width="21.8" height="3.3" fill="#1b5ca8"/><rect x="76.7" y="517.6" width="20.4" height="6" fill="#f4f4f4" stroke="#1b5ca8" stroke-width="1.4"/><g stroke="#f0f0f0" stroke-width="1.3"><path d="M79.5 513.5 L82 510 M85 512.9 L87.5 509.4 M90.5 512.3 L93 508.8  M79.5 517.5 L82 514.2 M85 517.5 L87.5 514.2 M90.5 517.5 L93 514.2"/></g></g>
<g stroke="#1b5ca8" stroke-width="1.6" fill="none"><rect x="24.1" y="551.4" width="15.1" height="14.7"/><path d="M31.65 551.4 V566.1 M24.1 558.75 H39.2"/></g>
<g stroke="#1b5ca8" stroke-width="1.7" fill="none" stroke-linecap="round"><path d="M30.6 598 L25 608.8 M33.4 601.3 L38 608.8"/><circle cx="31.3" cy="596.3" r="1.6" stroke-width="1.3"/><path d="M32.3 595 L33.3 593.5" stroke-width="1.4"/></g>
<g transform="translate(87.2 601.4) rotate(-46.5)"><rect x="-8.5" y="-2.3" width="17" height="4.6" fill="none" stroke="#1b5ca8" stroke-width="1.4"/><path d="M-5.5 -2.3 v2 M-2.8 -2.3 v2 M0 -2.3 v2 M2.8 -2.3 v2 M5.5 -2.3 v2" stroke="#1b5ca8" stroke-width="0.8"/></g>
<g stroke="#1b5ca8" fill="none"><rect x="26.8" y="636.9" width="13" height="11.6" stroke-width="1.3"/><path d="M22.9 639.2 V652.2 H37.4" stroke-width="1.3"/><path d="M28.3 641.3 C29.3 646.5 30.8 646.8 31.8 643.8 C32.6 640.6 33.6 640.6 34.4 643.6 C35.4 646.6 37 646 38.5 640.2" stroke-width="1.1"/></g>
<g><rect x="80.1" y="637.1" width="11.7" height="13.9" rx="1.6" fill="none" stroke="#1b5ca8" stroke-width="1.3"/><path d="M84.2 651.4 L85 648.6 L92.6 641.4 L94.6 643.5 L87 650.7 Z" fill="#1b5ca8" stroke="#f0f0f0" stroke-width="0.5"/></g>
<g stroke="#1b5ca8" stroke-width="1.7" fill="none"><path d="M20.9 679.6 H26.5 C29 679.6 33.8 686.9 36.3 686.9 H41.9 M20.9 686.9 H26.5 C29 686.9 33.8 679.6 36.3 679.6 H41.9"/></g><text x="31.3" y="695.1" font-family="Liberation Sans" font-size="7.8" font-weight="400" stroke="#3c74b4" stroke-width="0.35" fill="#3c74b4" text-anchor="middle" textLength="18" lengthAdjust="spacingAndGlyphs">1101</text>
<g><path d="M77.8 678.9 H96.1 Q96.9 678.9 96.9 679.7 V691.1 Q96.9 691.9 96.1 691.9 H80.8 L77 695.2 V679.7 Q77 678.9 77.8 678.9Z" fill="#1b5ca8"/><rect x="86.3" y="681.3" width="1.9" height="1.9" fill="#fff"/><rect x="86.3" y="684.6" width="1.9" height="5.4" fill="#fff"/></g>
<path d="M80 550.6 H93.9 L94.3 555.9 H93.2 Q92.6 552.6 89.8 552.6 H86.3 L90.6 558.2 L84.8 564.5 H90.6 Q93.3 564.5 94 561 H95 L94.3 566.9 H79.8 V566 L85.6 559.4 L80 551.8 Z" fill="#1b5ca8"/>
<path transform="translate(16.6 484.3) scale(0.56 0.62) translate(-79.8 -550.6)" d="M80 550.6 H93.9 L94.3 555.9 H93.2 Q92.6 552.6 89.8 552.6 H86.3 L90.6 558.2 L84.8 564.5 H90.6 Q93.3 564.5 94 561 H95 L94.3 566.9 H79.8 V566 L85.6 559.4 L80 551.8 Z" fill="#4b1a8a"/>
<g><rect x="118.7" y="66" width="24.5" height="10.5" rx="2.5" fill="#fff" stroke="#2568b0" stroke-width="1.15"/><path d="M143.4 66.3 L148.3 71.2 L143.4 76.2 Z" fill="#1b5ca8"/></g>
<g><rect x="1414.2" y="65.8" width="24.2" height="10.6" rx="3" fill="#fff" stroke="#7a3aa8" stroke-width="1.25"/><path d="M1414 65.6 L1408.6 71.1 L1414 76.6 Z" fill="#4a1a8a"/></g>
<g><rect x="128.6" y="765.4" width="26.3" height="20" rx="2.5" fill="#fff" stroke="#2568b0" stroke-width="1.05"/><path d="M138.2 765.4 L143 760 L147.8 765.4 Z" fill="#1b5ca8"/></g>
<defs><linearGradient id="lg" gradientUnits="userSpaceOnUse" x1="1340" y1="0" x2="1430" y2="0"><stop offset="0" stop-color="#dbe9f5"/><stop offset="0.45" stop-color="#9cc0e0"/><stop offset="0.75" stop-color="#3f70b0"/><stop offset="1" stop-color="#27509a"/></linearGradient></defs>
<g><path d="M1340.0 50.6 C1352.0 50.6 1354.0 40.6 1366.0 40.6 C1378.0 40.6 1384.0 50.4 1394.0 50.4 C1400.0 50.4 1404.0 44 1409.0 40.2" fill="none" stroke="url(#lg)" stroke-width="0.45"/><path d="M1342.3 50.6 C1354.3 50.6 1356.3 40.6 1368.3 40.6 C1380.3 40.6 1386.3 50.4 1396.3 50.4 C1402.3 50.4 1406.3 44 1411.3 40.2" fill="none" stroke="url(#lg)" stroke-width="0.45"/><path d="M1344.6 50.6 C1356.6 50.6 1358.6 40.6 1370.6 40.6 C1382.6 40.6 1388.6 50.4 1398.6 50.4 C1404.6 50.4 1408.6 44 1413.6 40.2" fill="none" stroke="url(#lg)" stroke-width="0.45"/><path d="M1346.9 50.6 C1358.9 50.6 1360.9 40.6 1372.9 40.6 C1384.9 40.6 1390.9 50.4 1400.9 50.4 C1406.9 50.4 1410.9 44 1415.9 40.2" fill="none" stroke="url(#lg)" stroke-width="0.45"/><path d="M1349.2 50.6 C1361.2 50.6 1363.2 40.6 1375.2 40.6 C1387.2 40.6 1393.2 50.4 1403.2 50.4 C1409.2 50.4 1413.2 44 1418.2 40.2" fill="none" stroke="url(#lg)" stroke-width="0.45"/><path d="M1351.5 50.6 C1363.5 50.6 1365.5 40.6 1377.5 40.6 C1389.5 40.6 1395.5 50.4 1405.5 50.4 C1411.5 50.4 1415.5 44 1420.5 40.2" fill="none" stroke="url(#lg)" stroke-width="0.45"/><path d="M1353.8 50.6 C1365.8 50.6 1367.8 40.6 1379.8 40.6 C1391.8 40.6 1397.8 50.4 1407.8 50.4 C1413.8 50.4 1417.8 44 1422.8 40.2" fill="none" stroke="url(#lg)" stroke-width="0.45"/><path d="M1356.1 50.6 C1368.1 50.6 1370.1 40.6 1382.1 40.6 C1394.1 40.6 1400.1 50.4 1410.1 50.4 C1416.1 50.4 1420.1 44 1425.1 40.2" fill="none" stroke="url(#lg)" stroke-width="0.45"/><path d="M1358.4 50.6 C1370.4 50.6 1372.4 40.6 1384.4 40.6 C1396.4 40.6 1402.4 50.4 1412.4 50.4 C1418.4 50.4 1422.4 44 1427.4 40.2" fill="none" stroke="url(#lg)" stroke-width="0.45"/><path d="M1360.7 50.6 C1372.7 50.6 1374.7 40.6 1386.7 40.6 C1398.7 40.6 1404.7 50.4 1414.7 50.4 C1420.7 50.4 1424.7 44 1429.7 40.2" fill="none" stroke="url(#lg)" stroke-width="0.45"/></g>
<text x="1344.6" y="36.9" font-family="Liberation Serif" font-size="23.6" fill="#7a7a7a" stroke="#7a7a7a" stroke-width="0.5" textLength="83" lengthAdjust="spacingAndGlyphs">pico</text>
<text x="1379.2" y="58.4" font-family="Liberation Serif" font-size="8.5" fill="#8a8a8a" textLength="43.2" lengthAdjust="spacingAndGlyphs">Technology</text>
<circle cx="1427.6" cy="24.5" r="1.1" fill="none" stroke="#999" stroke-width="0.4"/>
</svg>
<div class="t" style="left:17.5px;top:4.47px;font-size:8.8px;color:#fff;font-weight:400;">PicoScope 7 T&amp;M</div>
<div class="t tc" style="left:66.0px;top:35.55px;font-size:9.2px;color:#c8102e;font-weight:400;">Stopped</div>
<div class="t" style="left:137.3px;top:23.42px;font-size:8.9px;color:#aaa;font-weight:400;">Timebase</div>
<div class="t" style="left:137.3px;top:44.03px;font-size:11.2px;color:#aaa;font-weight:400;">5 µs/div</div>
<div class="t tr" style="left:231.0px;top:23.56px;font-size:6.5px;color:#999;font-weight:400;">Samples</div>
<div class="t tr" style="left:231.0px;top:32.36px;font-size:6.5px;color:#bbb;font-weight:400;">250 kS</div>
<div class="t tr" style="left:231.0px;top:41.56px;font-size:6.5px;color:#999;font-weight:400;">Sample rate</div>
<div class="t tr" style="left:231.0px;top:50.36px;font-size:6.5px;color:#bbb;font-weight:400;">5 GS/s</div>
<div class="t" style="left:276.2px;top:22.57px;font-size:8.8px;color:#333;font-weight:400;">Trigger</div>
<div class="t" style="left:276.2px;top:47.84px;font-size:11px;color:#1a3f7a;font-weight:400;-webkit-text-stroke:0.3px #1a3f7a;">0 V</div>
<div class="t tr" style="left:347.5px;top:22.66px;font-size:6.5px;color:#1a3f7a;font-weight:400;">A</div>
<div class="t tr" style="left:362.5px;top:32.66px;font-size:6.5px;color:#1a3f7a;font-weight:400;">10 %</div>
<div class="t tr" style="left:362.5px;top:42.36px;font-size:6.5px;color:#1a3f7a;font-weight:400;">Simple edge</div>
<div class="t tr" style="left:362.5px;top:52.06px;font-size:6.5px;color:#1a3f7a;font-weight:400;">Repeat</div>
<div class="t tc" style="left:433.5px;top:24.02px;font-size:8.9px;color:#333;font-weight:400;">Waveform</div>
<div class="t tc" style="left:433.5px;top:36.36px;font-size:10.6px;color:#1a3f7a;font-weight:400;-webkit-text-stroke:0.3px #1a3f7a;">9</div>
<div class="t tc" style="left:433.5px;top:51.06px;font-size:6.5px;color:#1a3f7a;font-weight:400;">of 9</div>
<div class="t tc" style="left:531.0px;top:23.02px;font-size:8.9px;color:#333;font-weight:400;">Hardware</div>
<div class="t tc" style="left:531.0px;top:34.62px;font-size:8.9px;color:#333;font-weight:400;">resolution</div>
<div class="t tc" style="left:531.0px;top:47.65px;font-size:9.2px;color:#1a3f7a;font-weight:400;-webkit-text-stroke:0.25px #1a3f7a;">10 bits</div>
<div class="t tc" style="left:607.5px;top:46.38px;font-size:7px;color:#1b4f9c;font-weight:400;">Instruments</div>
<div class="t tc" style="left:655.5px;top:46.38px;font-size:7px;color:#aaa;font-weight:400;">Auto setup</div>
<div class="t tc" style="left:703.6px;top:46.38px;font-size:7px;color:#1b4f9c;font-weight:400;">Open</div>
<div class="t tc" style="left:751.5px;top:46.38px;font-size:7px;color:#1b4f9c;font-weight:400;">Save</div>
<div class="t tc" style="left:799.4px;top:46.38px;font-size:7px;color:#1b4f9c;font-weight:400;">Print</div>
<div class="t tc" style="left:847.5px;top:46.38px;font-size:7px;color:#1b4f9c;font-weight:400;">Full</div>
<div class="t" style="left:24.5px;top:67.24px;font-size:8.5px;color:#1b4f9c;font-weight:400;-webkit-text-stroke:0.2px #1b4f9c;">A</div>
<div class="t" style="left:24.5px;top:89.44px;font-size:11px;color:#1b4f9c;font-weight:400;-webkit-text-stroke:0.15px #1b4f9c;">±2 V</div>
<div class="t tr" style="left:94.3px;top:66.46px;font-size:6.5px;color:#444;font-weight:400;">DC</div>
<div class="t tr" style="left:94.3px;top:75.41px;font-size:6.5px;color:#444;font-weight:400;">x1</div>
<div class="t tr" style="left:94.3px;top:84.36px;font-size:6.5px;color:#444;font-weight:400;">Filtered</div>
<div class="t tr" style="left:94.3px;top:93.31px;font-size:6.5px;color:#444;font-weight:400;">900 mV</div>
<div class="t" style="left:24.5px;top:109.39px;font-size:8.5px;color:#e4002b;font-weight:400;-webkit-text-stroke:0.2px #e4002b;">B</div>
<div class="t" style="left:24.5px;top:131.76px;font-size:10.7px;color:#e4002b;font-weight:400;-webkit-text-stroke:0.15px #e4002b;">Off</div>
<div class="t tr" style="left:94.3px;top:108.61px;font-size:6.5px;color:#444;font-weight:400;">DC</div>
<div class="t tr" style="left:94.3px;top:117.56px;font-size:6.5px;color:#444;font-weight:400;">x10</div>
<div class="t tr" style="left:94.3px;top:126.51px;font-size:6.5px;color:#444;font-weight:400;">Filtered</div>
<div class="t" style="left:24.5px;top:151.54px;font-size:8.5px;color:#178a3a;font-weight:400;-webkit-text-stroke:0.2px #178a3a;">C</div>
<div class="t" style="left:24.5px;top:173.91px;font-size:10.7px;color:#178a3a;font-weight:400;-webkit-text-stroke:0.15px #178a3a;">Off</div>
<div class="t tr" style="left:94.3px;top:150.76px;font-size:6.5px;color:#444;font-weight:400;">DC</div>
<div class="t tr" style="left:94.3px;top:159.71px;font-size:6.5px;color:#444;font-weight:400;">x1</div>
<div class="t" style="left:24.5px;top:193.69px;font-size:8.5px;color:#d4a02a;font-weight:400;-webkit-text-stroke:0.2px #d4a02a;">D</div>
<div class="t" style="left:24.5px;top:216.06px;font-size:10.7px;color:#d4a02a;font-weight:400;-webkit-text-stroke:0.15px #d4a02a;">Off</div>
<div class="t tr" style="left:94.3px;top:192.91px;font-size:6.5px;color:#444;font-weight:400;">DC</div>
<div class="t tr" style="left:94.3px;top:201.86px;font-size:6.5px;color:#444;font-weight:400;">x1</div>
<div class="t" style="left:24.5px;top:235.84px;font-size:8.5px;color:#5b2a91;font-weight:400;-webkit-text-stroke:0.2px #5b2a91;">E</div>
<div class="t" style="left:24.5px;top:258.21px;font-size:10.7px;color:#5b2a91;font-weight:400;-webkit-text-stroke:0.15px #5b2a91;">Off</div>
<div class="t tr" style="left:94.3px;top:235.06px;font-size:6.5px;color:#444;font-weight:400;">DC</div>
<div class="t tr" style="left:94.3px;top:244.01px;font-size:6.5px;color:#444;font-weight:400;">x1</div>
<div class="t" style="left:24.5px;top:277.99px;font-size:8.5px;color:#8a8a8a;font-weight:400;-webkit-text-stroke:0.2px #8a8a8a;">F</div>
<div class="t" style="left:24.5px;top:300.36px;font-size:10.7px;color:#8a8a8a;font-weight:400;-webkit-text-stroke:0.15px #8a8a8a;">Off</div>
<div class="t tr" style="left:94.3px;top:277.21px;font-size:6.5px;color:#444;font-weight:400;">DC</div>
<div class="t tr" style="left:94.3px;top:286.16px;font-size:6.5px;color:#444;font-weight:400;">x1</div>
<div class="t" style="left:24.5px;top:320.14px;font-size:8.5px;color:#2a9ad6;font-weight:400;-webkit-text-stroke:0.2px #2a9ad6;">G</div>
<div class="t" style="left:24.5px;top:342.51px;font-size:10.7px;color:#2a9ad6;font-weight:400;-webkit-text-stroke:0.15px #2a9ad6;">Off</div>
<div class="t tr" style="left:94.3px;top:319.36px;font-size:6.5px;color:#444;font-weight:400;">DC</div>
<div class="t tr" style="left:94.3px;top:328.31px;font-size:6.5px;color:#444;font-weight:400;">x1</div>
<div class="t" style="left:24.5px;top:362.29px;font-size:8.5px;color:#b0174f;font-weight:400;-webkit-text-stroke:0.2px #b0174f;">H</div>
<div class="t" style="left:24.5px;top:384.66px;font-size:10.7px;color:#b0174f;font-weight:400;-webkit-text-stroke:0.15px #b0174f;">Off</div>
<div class="t tr" style="left:94.3px;top:361.51px;font-size:6.5px;color:#444;font-weight:400;">DC</div>
<div class="t tr" style="left:94.3px;top:370.46px;font-size:6.5px;color:#444;font-weight:400;">x1</div>
<div class="t" style="left:24.5px;top:403.52px;font-size:8.9px;color:#1a3f7a;font-weight:400;">1D7-1D0</div>
<div class="t tr" style="left:94.5px;top:403.74px;font-size:8.5px;color:#1a3f7a;font-weight:400;">Off</div>
<div class="t" style="left:24.5px;top:423.82px;font-size:8.9px;color:#1a3f7a;font-weight:400;">2D7-2D0</div>
<div class="t tr" style="left:94.5px;top:424.04px;font-size:8.5px;color:#1a3f7a;font-weight:400;">Off</div>
<div class="t" style="left:27.0px;top:445.94px;font-size:8.5px;color:#444;font-weight:400;">Gen</div>
<div class="t tr" style="left:92.0px;top:445.77px;font-size:8.8px;color:#1f4e8c;font-weight:400;">1 MHz</div>
<div class="t tr" style="left:92.0px;top:464.46px;font-size:9px;color:#1f4e8c;font-weight:400;">900 mV</div>
<div class="t" style="left:30.5px;top:485.90px;font-size:9.1px;color:#1a3f7a;font-weight:400;">freq(A)</div>
<div class="t tc" style="left:31.4px;top:532.29px;font-size:6.8px;color:#1b4f9c;font-weight:400;">More...</div>
<div class="t tc" style="left:87.0px;top:532.29px;font-size:6.8px;color:#1b4f9c;font-weight:400;">Actions</div>
<div class="t tc" style="left:31.4px;top:574.99px;font-size:6.8px;color:#1b4f9c;font-weight:400;">Views</div>
<div class="t tc" style="left:87.0px;top:574.99px;font-size:6.8px;color:#1b4f9c;font-weight:400;">Math channels</div>
<div class="t tc" style="left:31.4px;top:617.79px;font-size:6.8px;color:#1b4f9c;font-weight:400;">Measurements</div>
<div class="t tc" style="left:87.0px;top:617.79px;font-size:6.8px;color:#1b4f9c;font-weight:400;">Rulers</div>
<div class="t tc" style="left:31.4px;top:656.19px;font-size:6.8px;color:#1b4f9c;font-weight:400;">Reference</div>
<div class="t tc" style="left:31.4px;top:664.79px;font-size:6.8px;color:#1b4f9c;font-weight:400;">waveforms</div>
<div class="t tc" style="left:87.0px;top:660.29px;font-size:6.8px;color:#1b4f9c;font-weight:400;">Notes</div>
<div class="t tc" style="left:31.4px;top:703.29px;font-size:6.8px;color:#1b4f9c;font-weight:400;">Serial decoding</div>
<div class="t tc" style="left:87.0px;top:703.29px;font-size:6.8px;color:#1b4f9c;font-weight:400;">Send feedback</div>
<div class="t tr" style="left:142.0px;top:88.25px;font-size:9.2px;color:#1b5faa;font-weight:400;-webkit-text-stroke:0.2px #1b5faa;">V</div>
<div class="t tr" style="left:142.0px;top:100.92px;font-size:8.9px;color:#1b5faa;font-weight:400;-webkit-text-stroke:0.2px #1b5faa;">2.0</div>
<div class="t tr" style="left:142.0px;top:135.92px;font-size:8.9px;color:#1b5faa;font-weight:400;-webkit-text-stroke:0.2px #1b5faa;">1.6</div>
<div class="t tr" style="left:142.0px;top:205.42px;font-size:8.9px;color:#1b5faa;font-weight:400;-webkit-text-stroke:0.2px #1b5faa;">0.8</div>
<div class="t tr" style="left:142.0px;top:274.92px;font-size:8.9px;color:#1b5faa;font-weight:400;-webkit-text-stroke:0.2px #1b5faa;">0.0</div>
<div class="t tr" style="left:142.0px;top:344.42px;font-size:8.9px;color:#1b5faa;font-weight:400;-webkit-text-stroke:0.2px #1b5faa;">-0.8</div>
<div class="t tr" style="left:142.0px;top:413.92px;font-size:8.9px;color:#1b5faa;font-weight:400;-webkit-text-stroke:0.2px #1b5faa;">-1.6</div>
<div class="t tr" style="left:142.0px;top:448.42px;font-size:8.9px;color:#1b5faa;font-weight:400;-webkit-text-stroke:0.2px #1b5faa;">-2.0</div>
<div class="t" style="left:1415.8px;top:332.05px;font-size:9.2px;color:#5b2a91;font-weight:400;-webkit-text-stroke:0.2px #5b2a91;">MHz</div>
<div class="t" style="left:1415.8px;top:344.20px;font-size:9.1px;color:#5b2a91;font-weight:400;-webkit-text-stroke:0.2px #5b2a91;">1.6</div>
<div class="t" style="left:1415.8px;top:413.50px;font-size:9.1px;color:#5b2a91;font-weight:400;-webkit-text-stroke:0.2px #5b2a91;">1.401</div>
<div class="t" style="left:1415.8px;top:482.70px;font-size:9.1px;color:#5b2a91;font-weight:400;-webkit-text-stroke:0.2px #5b2a91;">1.202</div>
<div class="t" style="left:1415.8px;top:552.20px;font-size:9.1px;color:#5b2a91;font-weight:400;-webkit-text-stroke:0.2px #5b2a91;">1.001</div>
<div class="t" style="left:1415.8px;top:621.70px;font-size:9.1px;color:#5b2a91;font-weight:400;-webkit-text-stroke:0.2px #5b2a91;">0.802</div>
<div class="t" style="left:1415.8px;top:691.20px;font-size:9.1px;color:#5b2a91;font-weight:400;-webkit-text-stroke:0.2px #5b2a91;">0.6</div>
<div class="t" style="left:134.7px;top:769.42px;font-size:8.9px;color:#2e2e2e;font-weight:400;-webkit-text-stroke:0.15px #333;">-5.0 µs</div>
<div class="t tc" style="left:269.3px;top:769.19px;font-size:9.3px;color:#2e2e2e;font-weight:400;-webkit-text-stroke:0.15px #333;">0.0</div>
<div class="t tc" style="left:396.5px;top:769.19px;font-size:9.3px;color:#2e2e2e;font-weight:400;-webkit-text-stroke:0.15px #333;">5.0</div>
<div class="t tc" style="left:523.7px;top:769.19px;font-size:9.3px;color:#2e2e2e;font-weight:400;-webkit-text-stroke:0.15px #333;">10.0</div>
<div class="t tc" style="left:650.9px;top:769.19px;font-size:9.3px;color:#2e2e2e;font-weight:400;-webkit-text-stroke:0.15px #333;">15.0</div>
<div class="t tc" style="left:778.1px;top:769.19px;font-size:9.3px;color:#2e2e2e;font-weight:400;-webkit-text-stroke:0.15px #333;">20.0</div>
<div class="t tc" style="left:905.3px;top:769.19px;font-size:9.3px;color:#2e2e2e;font-weight:400;-webkit-text-stroke:0.15px #333;">25.0</div>
<div class="t tc" style="left:1032.5px;top:769.19px;font-size:9.3px;color:#2e2e2e;font-weight:400;-webkit-text-stroke:0.15px #333;">30.0</div>
<div class="t tc" style="left:1159.7px;top:769.19px;font-size:9.3px;color:#2e2e2e;font-weight:400;-webkit-text-stroke:0.15px #333;">35.0</div>
<div class="t tc" style="left:1286.9px;top:769.19px;font-size:9.3px;color:#2e2e2e;font-weight:400;-webkit-text-stroke:0.15px #333;">40.0</div>
<div class="t tc" style="left:1414.1px;top:769.19px;font-size:9.3px;color:#2e2e2e;font-weight:400;-webkit-text-stroke:0.15px #333;">45.0</div>
<svg width="1440" height="780" viewBox="0 0 1440 780">
<rect x="1207.8" y="542" width="214.7" height="136" rx="3" fill="#fff" stroke="#a9cdf0" stroke-width="1"/>
<path d="M1207.8 553.8 V545 Q1207.8 542 1210.8 542 H1419.5 Q1422.5 542 1422.5 545 V553.8 Z" fill="#94c1ec"/>
<text x="1209.6" y="551.6" font-family="Liberation Sans" font-size="8.9" font-weight="700" fill="#fff">Zoom</text>
<g stroke="#fff" fill="none"><path d="M1388.5 548.3 H1394.5" stroke-width="0.9"/><rect x="1400.3" y="545.8" width="7" height="3.4" fill="#fff" stroke="none"/><path d="M1412.3 544.2 L1419.3 551.2 M1419.3 544.2 L1412.3 551.2" stroke-width="1.2"/></g>
<rect x="1235.3" y="561.3" width="178.5" height="70" fill="#fff"/>
<g stroke="#a8d6ec" stroke-width="0.9" stroke-dasharray="1.6 1.8" fill="none"><line x1="1253.1" y1="561.3" x2="1253.1" y2="631.3"/><line x1="1271.0" y1="561.3" x2="1271.0" y2="631.3"/><line x1="1288.8" y1="561.3" x2="1288.8" y2="631.3"/><line x1="1306.7" y1="561.3" x2="1306.7" y2="631.3"/><line x1="1324.5" y1="561.3" x2="1324.5" y2="631.3"/><line x1="1342.4" y1="561.3" x2="1342.4" y2="631.3"/><line x1="1360.2" y1="561.3" x2="1360.2" y2="631.3"/><line x1="1378.1" y1="561.3" x2="1378.1" y2="631.3"/><line x1="1395.9" y1="561.3" x2="1395.9" y2="631.3"/><line x1="1235.3" y1="568.3" x2="1413.8" y2="568.3"/><line x1="1235.3" y1="575.3" x2="1413.8" y2="575.3"/><line x1="1235.3" y1="582.3" x2="1413.8" y2="582.3"/><line x1="1235.3" y1="589.3" x2="1413.8" y2="589.3"/><line x1="1235.3" y1="596.3" x2="1413.8" y2="596.3"/><line x1="1235.3" y1="603.3" x2="1413.8" y2="603.3"/><line x1="1235.3" y1="610.3" x2="1413.8" y2="610.3"/><line x1="1235.3" y1="617.3" x2="1413.8" y2="617.3"/><line x1="1235.3" y1="624.3" x2="1413.8" y2="624.3"/></g>
<path d="M1235.23 567.21 L1235.37 566.31 L1235.51 565.73 L1235.65 565.48 L1235.79 565.58 L1235.93 566.02 L1236.07 566.77 L1236.21 567.82 L1236.35 569.11 L1236.49 570.60 L1236.63 572.23 L1236.77 573.94 L1236.91 575.67 L1237.05 577.35 L1237.19 578.91 L1237.33 580.31 L1237.48 581.49 L1237.62 582.41 L1237.76 583.03 L1237.90 583.34 L1238.04 583.33 L1238.18 583.00 L1238.32 582.36 L1238.46 581.44 L1238.60 580.26 L1238.74 578.89 L1238.88 577.36 L1239.02 575.72 L1239.16 574.05 L1239.30 572.39 L1239.44 570.80 L1239.58 569.35 L1239.72 568.07 L1239.86 567.01 L1240.00 566.21 L1240.14 565.69 L1240.28 565.47 L1240.42 565.55 L1240.56 565.93 L1240.70 566.60 L1240.84 567.53 L1240.98 568.69 L1241.12 570.03 L1241.26 571.52 L1241.40 573.10 L1241.54 574.72 L1241.69 576.33 L1241.83 577.87 L1241.97 579.30 L1242.11 580.57 L1242.25 581.64 L1242.39 582.47 L1242.53 583.05 L1242.67 583.35 L1242.81 583.37 L1242.95 583.10 L1243.09 582.56 L1243.23 581.77 L1243.37 580.76 L1243.51 579.54 L1243.65 578.17 L1243.79 576.69 L1243.93 575.14 L1244.07 573.58 L1244.21 572.04 L1244.35 570.58 L1244.49 569.23 L1244.63 568.05 L1244.77 567.05 L1244.91 566.28 L1245.05 565.75 L1245.19 565.48 L1245.33 565.48 L1245.47 565.73 L1245.61 566.24 L1245.75 566.98 L1245.89 567.94 L1246.04 569.08 L1246.18 570.38 L1246.32 571.78 L1246.46 573.26 L1246.60 574.77 L1246.74 576.27 L1246.88 577.71 L1247.02 579.05 L1247.16 580.27 L1247.30 581.32 L1247.44 582.18 L1247.58 582.82 L1247.72 583.23 L1247.86 583.40 L1248.00 583.33 L1248.14 583.02 L1248.28 582.48 L1248.42 581.72 L1248.56 580.77 L1248.70 579.65 L1248.84 578.40 L1248.98 577.05 L1249.12 575.63 L1249.26 574.18 L1249.40 572.74 L1249.54 571.35 L1249.68 570.04 L1249.82 568.84 L1249.96 567.79 L1250.10 566.91 L1250.25 566.23 L1250.39 565.74 L1250.53 565.48 L1250.67 565.44 L1250.81 565.63 L1250.95 566.03 L1251.09 566.63 L1251.23 567.43 L1251.37 568.39 L1251.51 569.50 L1251.65 570.72 L1251.79 572.03 L1251.93 573.39 L1252.07 574.78 L1252.21 576.15 L1252.35 577.48 L1252.49 578.74 L1252.63 579.89 L1252.77 580.91 L1252.91 581.78 L1253.05 582.48 L1253.19 582.99 L1253.33 583.31 L1253.47 583.43 L1253.61 583.09 L1253.75 582.04 L1253.89 579.81 L1254.03 576.77 L1254.17 573.37 L1254.31 570.13 L1254.46 567.55 L1254.60 566.02 L1254.74 565.76 L1254.88 566.83 L1255.02 569.04 L1255.16 572.06 L1255.30 575.44 L1255.44 578.66 L1255.58 581.24 L1255.72 582.80 L1255.86 583.10 L1256.00 582.11 L1256.14 579.97 L1256.28 577.01 L1256.42 573.67 L1256.56 570.44 L1256.70 567.80 L1256.84 566.15 L1256.98 565.71 L1257.12 566.55 L1257.26 568.55 L1257.40 571.41 L1257.54 574.70 L1257.68 577.95 L1257.82 580.69 L1257.96 582.51 L1258.10 583.16 L1258.24 582.54 L1258.38 580.76 L1258.52 578.06 L1258.66 574.84 L1258.81 571.57 L1258.95 568.71 L1259.09 566.66 L1259.23 565.73 L1259.37 566.03 L1259.51 567.53 L1259.65 570.00 L1259.79 573.09 L1259.93 576.38 L1260.07 579.38 L1260.21 581.68 L1260.35 582.97 L1260.49 583.05 L1260.63 581.93 L1260.77 579.77 L1260.91 576.86 L1261.05 573.61 L1261.19 570.49 L1261.33 567.91 L1261.47 566.23 L1261.61 565.68 L1261.75 566.33 L1261.89 568.10 L1262.03 570.73 L1262.17 573.86 L1262.31 577.06 L1262.45 579.91 L1262.59 582.00 L1262.73 583.07 L1262.87 582.97 L1263.02 581.71 L1263.16 579.48 L1263.30 576.56 L1263.44 573.36 L1263.58 570.31 L1263.72 567.81 L1263.86 566.19 L1264.00 565.67 L1264.14 566.31 L1264.28 568.03 L1264.42 570.58 L1264.56 573.65 L1264.70 576.81 L1264.84 579.65 L1264.98 581.81 L1265.12 583.00 L1265.26 583.07 L1265.40 582.01 L1265.54 579.97 L1265.68 577.21 L1265.82 574.09 L1265.96 571.02 L1266.10 568.39 L1266.24 566.54 L1266.38 565.70 L1266.52 565.98 L1266.66 567.33 L1266.80 569.60 L1266.94 572.47 L1267.08 575.59 L1267.23 578.55 L1267.37 581.00 L1267.51 582.61 L1267.65 583.19 L1267.79 582.67 L1267.93 581.11 L1268.07 578.73 L1268.21 575.80 L1268.35 572.71 L1268.49 569.83 L1268.63 567.53 L1268.77 566.08 L1268.91 565.66 L1269.05 566.32 L1269.19 567.98 L1269.33 570.42 L1269.47 573.35 L1269.61 576.41 L1269.75 579.23 L1269.89 581.46 L1270.03 582.83 L1270.17 583.18 L1270.31 582.48 L1270.45 580.80 L1270.59 578.36 L1270.73 575.46 L1270.87 572.42 L1271.01 569.64 L1271.15 567.42 L1271.29 566.04 L1271.44 565.66 L1271.58 566.31 L1271.72 567.92 L1271.86 570.30 L1272.00 573.16 L1272.14 576.16 L1272.28 578.96 L1272.42 581.23 L1272.56 582.70 L1272.70 583.21 L1272.84 582.69 L1272.98 581.23 L1273.12 578.97 L1273.26 576.20 L1273.40 573.22 L1273.54 570.39 L1273.68 568.02 L1273.82 566.38 L1273.96 565.66 L1274.10 565.94 L1274.24 567.18 L1274.38 569.24 L1274.52 571.88 L1274.66 574.81 L1274.80 577.69 L1274.94 580.20 L1275.08 582.06 L1275.22 583.07 L1275.36 583.11 L1275.50 582.19 L1275.64 580.41 L1275.79 577.97 L1275.93 575.14 L1276.07 572.23 L1276.21 569.57 L1276.35 567.44 L1276.49 566.08 L1276.63 565.63 L1276.77 566.14 L1276.91 567.54 L1277.05 569.69 L1277.19 572.35 L1277.33 575.23 L1277.47 578.02 L1277.61 580.42 L1277.75 582.18 L1277.89 583.10 L1278.03 583.10 L1278.17 582.18 L1278.31 580.44 L1278.45 578.06 L1278.59 575.30 L1278.73 572.45 L1278.87 569.81 L1279.01 567.66 L1279.15 566.21 L1279.29 565.63 L1279.43 565.96 L1279.57 567.17 L1279.71 569.13 L1279.85 571.64 L1280.00 574.43 L1280.14 577.21 L1280.28 579.71 L1280.42 581.66 L1280.56 582.88 L1280.70 583.23 L1280.84 582.68 L1280.98 581.30 L1281.12 579.22 L1281.26 576.67 L1281.40 573.88 L1281.54 571.16 L1281.68 568.77 L1281.82 566.94 L1281.96 565.86 L1282.10 565.64 L1282.24 566.28 L1282.38 567.74 L1282.52 569.84 L1282.66 572.40 L1282.80 575.16 L1282.94 577.84 L1283.08 580.18 L1283.22 581.96 L1283.36 583.00 L1283.50 583.21 L1283.64 582.57 L1283.78 581.15 L1283.92 579.07 L1284.06 576.56 L1284.21 573.84 L1284.35 571.18 L1284.49 568.83 L1284.63 567.02 L1284.77 565.91 L1284.91 565.61 L1285.05 566.14 L1285.19 567.45 L1285.33 569.42 L1285.47 571.85 L1285.61 574.52 L1285.75 577.18 L1285.89 579.57 L1286.03 581.49 L1286.17 582.75 L1286.31 583.24 L1286.45 582.92 L1286.59 581.82 L1286.73 580.04 L1286.87 577.75 L1287.01 575.16 L1287.15 572.51 L1287.29 570.03 L1287.43 567.95 L1287.57 566.46 L1287.71 565.69 L1287.85 565.70 L1287.99 566.49 L1288.13 567.99 L1288.27 570.07 L1288.41 572.52 L1288.56 575.14 L1288.70 577.70 L1288.84 579.96 L1288.98 581.74 L1289.12 582.87 L1289.26 583.26 L1289.40 582.88 L1289.54 581.76 L1289.68 580.01 L1289.82 577.78 L1289.96 575.26 L1290.10 572.67 L1290.24 570.23 L1290.38 568.16 L1290.52 566.62 L1290.66 565.76 L1290.80 565.63 L1290.94 566.24 L1291.08 567.55 L1291.22 569.43 L1291.36 571.73 L1291.50 574.26 L1291.64 576.80 L1291.78 579.13 L1291.92 581.07 L1292.06 582.46 L1292.20 583.18 L1292.34 583.17 L1292.48 582.45 L1292.62 581.07 L1292.77 579.14 L1292.91 576.83 L1293.05 574.33 L1293.19 571.84 L1293.33 569.56 L1293.47 567.68 L1293.61 566.34 L1293.75 565.66 L1293.89 565.67 L1294.03 566.39 L1294.17 567.75 L1294.31 569.63 L1294.45 571.89 L1294.59 574.35 L1294.73 576.82 L1294.87 579.09 L1295.01 580.99 L1295.15 582.38 L1295.29 583.14 L1295.43 583.23 L1295.57 582.63 L1295.71 581.40 L1295.85 579.63 L1295.99 577.47 L1296.13 575.07 L1296.27 572.63 L1296.41 570.32 L1296.55 568.34 L1296.69 566.81 L1296.83 565.87 L1296.98 565.57 L1297.12 565.93 L1297.26 566.94 L1297.40 568.50 L1297.54 570.50 L1297.68 572.79 L1297.82 575.20 L1297.96 577.55 L1298.10 579.67 L1298.24 581.39 L1298.38 582.61 L1298.52 583.22 L1298.66 583.19 L1298.80 582.53 L1298.94 581.27 L1299.08 579.53 L1299.22 577.42 L1299.36 575.09 L1299.50 572.72 L1299.64 570.48 L1299.78 568.52 L1299.92 566.98 L1300.06 565.97 L1300.20 565.56 L1300.34 565.78 L1300.48 566.60 L1300.62 567.97 L1300.76 569.78 L1300.90 571.92 L1301.04 574.23 L1301.19 576.55 L1301.33 578.72 L1301.47 580.59 L1301.61 582.04 L1301.75 582.96 L1301.89 583.30 L1302.03 583.03 L1302.17 582.18 L1302.31 580.81 L1302.45 579.01 L1302.59 576.90 L1302.73 574.63 L1302.87 572.35 L1303.01 570.21 L1303.15 568.36 L1303.29 566.90 L1303.43 565.95 L1303.57 565.55 L1303.71 565.74 L1303.85 566.50 L1303.99 567.77 L1304.13 569.47 L1304.27 571.49 L1304.41 573.70 L1304.55 575.95 L1304.69 578.10 L1304.83 580.01 L1304.97 581.57 L1305.11 582.66 L1305.25 583.23 L1305.39 583.24 L1305.54 582.70 L1305.68 581.64 L1305.82 580.12 L1305.96 578.25 L1306.10 576.15 L1306.24 573.94 L1306.38 571.77 L1306.52 569.76 L1306.66 568.04 L1306.80 566.71 L1306.94 565.86 L1307.08 565.54 L1307.22 565.75 L1307.36 566.49 L1307.50 567.70 L1307.64 569.32 L1307.78 571.25 L1307.92 573.36 L1308.06 575.53 L1308.20 577.63 L1308.34 579.54 L1308.48 581.14 L1308.62 582.35 L1308.76 583.09 L1308.90 583.32 L1309.04 583.03 L1309.18 582.24 L1309.32 581.00 L1309.46 579.38 L1309.60 577.48 L1309.75 575.40 L1309.89 573.28 L1310.03 571.22 L1310.17 569.34 L1310.31 567.76 L1310.45 566.56 L1310.59 565.80 L1310.73 565.52 L1310.87 565.75 L1311.01 566.45 L1311.15 567.60 L1311.29 569.13 L1311.43 570.95 L1311.57 572.95 L1311.71 575.03 L1311.85 577.08 L1311.99 578.98 L1312.13 580.62 L1312.27 581.93 L1312.41 582.84 L1312.55 583.28 L1312.69 583.26 L1312.83 582.76 L1312.97 581.82 L1313.11 580.48 L1313.25 578.83 L1313.39 576.95 L1313.53 574.94 L1313.67 572.91 L1313.81 570.95 L1313.96 569.18 L1314.10 567.69 L1314.24 566.54 L1314.38 565.81 L1314.52 565.51 L1314.66 565.68 L1314.80 566.28 L1314.94 567.30 L1315.08 568.68 L1315.22 570.35 L1315.36 572.22 L1315.50 574.19 L1315.64 576.18 L1315.78 578.07 L1315.92 579.78 L1316.06 581.22 L1316.20 582.33 L1316.34 583.04 L1316.48 583.34 L1316.62 583.20 L1316.76 582.63 L1316.90 581.67 L1317.04 580.36 L1317.18 578.76 L1317.32 576.96 L1317.46 575.05 L1317.60 573.10 L1317.74 571.23 L1317.88 569.50 L1318.02 568.01 L1318.16 566.83 L1318.31 566.00 L1318.45 565.56 L1318.59 565.54 L1318.73 565.92 L1318.87 566.70 L1319.01 567.83 L1319.15 569.26 L1319.29 570.92 L1319.43 572.74 L1319.57 574.63 L1319.71 576.51 L1319.85 578.29 L1319.99 579.90 L1320.13 581.25 L1320.27 582.31 L1320.41 583.01 L1320.55 583.34 L1320.69 583.27 L1320.83 582.81 L1320.97 581.99 L1321.11 580.85 L1321.25 579.42 L1321.39 577.79 L1321.53 576.01 L1321.67 574.17 L1321.81 572.34 L1321.95 570.60 L1322.09 569.03 L1322.23 567.69 L1322.37 566.63 L1322.52 565.90 L1322.66 565.53 L1322.80 565.53 L1322.94 565.89 L1323.08 566.61 L1323.22 567.64 L1323.36 568.95 L1323.50 570.48 L1323.64 572.17 L1323.78 573.95 L1323.92 575.74 L1324.06 577.47 L1324.20 579.08 L1324.34 580.51 L1324.48 581.69 L1324.62 582.58 L1324.76 583.14 L1324.90 583.37 L1325.04 583.24 L1325.18 582.78 L1325.32 581.99 L1325.46 580.91 L1325.60 579.58 L1325.74 578.06 L1325.88 576.40 L1326.02 574.67 L1326.16 572.93 L1326.30 571.26 L1326.44 569.70 L1326.58 568.33 L1326.73 567.18 L1326.87 566.31 L1327.01 565.73 L1327.15 565.48 L1327.29 565.56 L1327.43 565.95 L1327.57 566.66 L1327.71 567.64 L1327.85 568.87 L1327.99 570.30 L1328.13 571.86 L1328.27 573.52 L1328.41 575.21 L1328.55 576.86 L1328.69 578.43 L1328.83 579.85 L1328.97 581.08 L1329.11 582.08 L1329.25 582.81 L1329.39 583.25 L1329.53 583.39 L1329.67 583.22 L1329.81 582.75 L1329.95 582.00 L1330.09 581.00 L1330.23 579.77 L1330.37 578.38 L1330.51 576.85 L1330.65 575.24 L1330.79 573.62 L1330.94 572.02 L1331.08 570.50 L1331.22 569.12 L1331.36 567.90 L1331.50 566.91 L1331.64 566.15 L1331.78 565.67 L1331.92 565.46 L1332.06 565.54 L1332.20 565.90 L1332.34 566.53 L1332.48 567.40 L1332.62 568.49 L1332.76 569.76 L1332.90 571.18 L1333.04 572.69 L1333.18 574.25 L1333.32 575.82 L1333.46 577.33 L1333.60 578.76 L1333.74 580.05 L1333.88 581.18 L1334.02 582.09 L1334.16 582.78 L1334.30 583.22 L1334.44 583.40 L1334.58 583.31 L1334.72 582.97 L1334.86 582.38 L1335.00 581.55 L1335.14 580.53 L1335.29 579.33 L1335.43 578.00 L1335.57 576.56 L1335.71 575.07 L1335.85 573.57 L1335.99 572.09 L1336.13 570.68 L1336.27 569.37 L1336.41 568.21 L1336.55 567.23 L1336.69 566.44 L1336.83 565.87 L1336.97 565.53 L1337.11 565.44 L1337.25 565.59 L1337.39 565.97 L1337.53 566.58 L1337.67 567.39 L1337.81 568.39 L1337.95 569.54 L1338.09 570.82 L1338.23 572.19 L1338.37 573.61 L1338.51 575.05 L1338.65 576.47 L1338.79 577.84 L1338.93 579.12 L1339.07 580.27 L1339.21 581.28 L1339.35 582.11 L1339.50 582.75 L1339.64 583.18 L1339.78 583.39 L1339.92 583.39 L1340.06 583.16 L1340.20 582.73 L1340.34 582.09 L1340.48 581.27 L1340.62 580.29 L1340.76 579.17 L1340.90 577.95 L1341.04 576.64 L1341.18 575.28 L1341.32 573.91 L1341.46 572.55 L1341.60 571.24 L1341.74 570.01 L1341.88 568.88 L1342.02 567.87 L1342.16 567.02 L1342.30 566.34 L1342.44 565.84 L1342.58 565.53 L1342.72 565.77 L1342.86 566.01 L1343.00 567.54 L1343.14 570.12 L1343.28 573.35 L1343.42 576.75 L1343.56 579.79 L1343.71 582.01 L1343.85 583.08 L1343.99 582.84 L1344.13 581.33 L1344.27 578.78 L1344.41 575.58 L1344.55 572.21 L1344.69 569.17 L1344.83 566.92 L1344.97 565.79 L1345.11 565.95 L1345.25 567.36 L1345.39 569.83 L1345.53 572.97 L1345.67 576.32 L1345.81 579.39 L1345.95 581.73 L1346.09 582.99 L1346.23 583.00 L1346.37 581.75 L1346.51 579.43 L1346.65 576.39 L1346.79 573.06 L1346.93 569.94 L1347.07 567.46 L1347.21 566.00 L1347.35 565.75 L1347.49 566.75 L1347.63 568.85 L1347.77 571.75 L1347.91 575.03 L1348.06 578.22 L1348.20 580.87 L1348.34 582.60 L1348.48 583.16 L1348.62 582.49 L1348.76 580.68 L1348.90 577.98 L1349.04 574.79 L1349.18 571.55 L1349.32 568.72 L1349.46 566.68 L1349.60 565.73 L1349.74 565.99 L1349.88 567.43 L1350.02 569.83 L1350.16 572.87 L1350.30 576.12 L1350.44 579.14 L1350.58 581.50 L1350.72 582.89 L1350.86 583.11 L1351.00 582.15 L1351.14 580.13 L1351.28 577.33 L1351.42 574.15 L1351.56 571.00 L1351.70 568.32 L1351.84 566.47 L1351.98 565.69 L1352.12 566.09 L1352.27 567.61 L1352.41 570.04 L1352.55 573.06 L1352.69 576.25 L1352.83 579.20 L1352.97 581.51 L1353.11 582.88 L1353.25 583.13 L1353.39 582.23 L1353.53 580.29 L1353.67 577.59 L1353.81 574.47 L1353.95 571.35 L1354.09 568.64 L1354.23 566.68 L1354.37 565.73 L1354.51 565.92 L1354.65 567.20 L1354.79 569.42 L1354.93 572.29 L1355.07 575.42 L1355.21 578.43 L1355.35 580.92 L1355.49 582.57 L1355.63 583.18 L1355.77 582.68 L1355.91 581.12 L1356.05 578.72 L1356.19 575.77 L1356.33 572.65 L1356.48 569.76 L1356.62 567.47 L1356.76 566.04 L1356.90 565.67 L1357.04 566.40 L1357.18 568.12 L1357.32 570.63 L1357.46 573.61 L1357.60 576.69 L1357.74 579.48 L1357.88 581.65 L1358.02 582.92 L1358.16 583.15 L1358.30 582.30 L1358.44 580.50 L1358.58 577.95 L1358.72 574.97 L1358.86 571.93 L1359.00 569.20 L1359.14 567.10 L1359.28 565.89 L1359.42 565.71 L1359.56 566.58 L1359.70 568.39 L1359.84 570.92 L1359.98 573.87 L1360.12 576.88 L1360.26 579.60 L1360.40 581.70 L1360.54 582.93 L1360.69 583.16 L1360.83 582.36 L1360.97 580.62 L1361.11 578.16 L1361.25 575.26 L1361.39 572.27 L1361.53 569.53 L1361.67 567.36 L1361.81 566.02 L1361.95 565.65 L1362.09 566.30 L1362.23 567.88 L1362.37 570.22 L1362.51 573.03 L1362.65 576.01 L1362.79 578.80 L1362.93 581.08 L1363.07 582.61 L1363.21 583.21 L1363.35 582.80 L1363.49 581.46 L1363.63 579.32 L1363.77 576.63 L1363.91 573.69 L1364.05 570.84 L1364.19 568.40 L1364.33 566.63 L1364.47 565.73 L1364.61 565.79 L1364.75 566.81 L1364.89 568.68 L1365.04 571.17 L1365.18 574.02 L1365.32 576.91 L1365.46 579.53 L1365.60 581.58 L1365.74 582.86 L1365.88 583.21 L1366.02 582.61 L1366.16 581.12 L1366.30 578.91 L1366.44 576.22 L1366.58 573.34 L1366.72 570.58 L1366.86 568.23 L1367.00 566.55 L1367.14 565.70 L1367.28 565.79 L1367.42 566.79 L1367.56 568.60 L1367.70 571.02 L1367.84 573.80 L1367.98 576.64 L1368.12 579.24 L1368.26 581.34 L1368.40 582.72 L1368.54 583.23 L1368.68 582.82 L1368.82 581.55 L1368.96 579.54 L1369.10 577.00 L1369.25 574.20 L1369.39 571.43 L1369.53 568.97 L1369.67 567.07 L1369.81 565.92 L1369.95 565.63 L1370.09 566.24 L1370.23 567.67 L1370.37 569.79 L1370.51 572.37 L1370.65 575.15 L1370.79 577.86 L1370.93 580.22 L1371.07 582.00 L1371.21 583.02 L1371.35 583.19 L1371.49 582.49 L1371.63 581.00 L1371.77 578.86 L1371.91 576.28 L1372.05 573.53 L1372.19 570.86 L1372.33 568.55 L1372.47 566.81 L1372.61 565.81 L1372.75 565.65 L1372.89 566.34 L1373.03 567.80 L1373.17 569.90 L1373.31 572.43 L1373.46 575.15 L1373.60 577.80 L1373.74 580.12 L1373.88 581.90 L1374.02 582.97 L1374.16 583.23 L1374.30 582.66 L1374.44 581.31 L1374.58 579.32 L1374.72 576.87 L1374.86 574.20 L1375.00 571.55 L1375.14 569.17 L1375.28 567.28 L1375.42 566.06 L1375.56 565.60 L1375.70 565.96 L1375.84 567.09 L1375.98 568.90 L1376.12 571.20 L1376.26 573.80 L1376.40 576.45 L1376.54 578.91 L1376.68 580.97 L1376.82 582.43 L1376.96 583.17 L1377.10 583.13 L1377.24 582.31 L1377.38 580.78 L1377.52 578.69 L1377.66 576.22 L1377.81 573.60 L1377.95 571.05 L1378.09 568.81 L1378.23 567.05 L1378.37 565.95 L1378.51 565.59 L1378.65 566.00 L1378.79 567.14 L1378.93 568.91 L1379.07 571.16 L1379.21 573.69 L1379.35 576.27 L1379.49 578.70 L1379.63 580.75 L1379.77 582.27 L1379.91 583.11 L1380.05 583.21 L1380.19 582.57 L1380.33 581.24 L1380.47 579.34 L1380.61 577.03 L1380.75 574.50 L1380.89 571.96 L1381.03 569.64 L1381.17 567.72 L1381.31 566.35 L1381.45 565.66 L1381.59 565.69 L1381.73 566.44 L1381.87 567.84 L1382.02 569.78 L1382.16 572.10 L1382.30 574.61 L1382.44 577.09 L1382.58 579.36 L1382.72 581.23 L1382.86 582.54 L1383.00 583.20 L1383.14 583.16 L1383.28 582.42 L1383.42 581.04 L1383.56 579.14 L1383.70 576.86 L1383.84 574.40 L1383.98 571.94 L1384.12 569.68 L1384.26 567.79 L1384.40 566.43 L1384.54 565.69 L1384.68 565.63 L1384.82 566.25 L1384.96 567.51 L1385.10 569.30 L1385.24 571.48 L1385.38 573.88 L1385.52 576.32 L1385.66 578.62 L1385.80 580.59 L1385.94 582.09 L1386.08 583.01 L1386.23 583.28 L1386.37 582.88 L1386.51 581.85 L1386.65 580.26 L1386.79 578.24 L1386.93 575.94 L1387.07 573.53 L1387.21 571.19 L1387.35 569.09 L1387.49 567.38 L1387.63 566.20 L1387.77 565.61 L1387.91 565.68 L1388.05 566.37 L1388.19 567.66 L1388.33 569.43 L1388.47 571.56 L1388.61 573.89 L1388.75 576.26 L1388.89 578.49 L1389.03 580.43 L1389.17 581.94 L1389.31 582.92 L1389.45 583.29 L1389.59 583.04 L1389.73 582.18 L1389.87 580.78 L1390.01 578.93 L1390.15 576.78 L1390.29 574.46 L1390.44 572.14 L1390.58 569.99 L1390.72 568.14 L1390.86 566.73 L1391.00 565.85 L1391.14 565.55 L1391.28 565.86 L1391.42 566.75 L1391.56 568.16 L1391.70 569.99 L1391.84 572.12 L1391.98 574.40 L1392.12 576.67 L1392.26 578.80 L1392.40 580.63 L1392.54 582.05 L1392.68 582.95 L1392.82 583.30 L1392.96 583.06 L1393.10 582.26 L1393.24 580.94 L1393.38 579.20 L1393.52 577.15 L1393.66 574.93 L1393.80 572.68 L1393.94 570.55 L1394.08 568.66 L1394.22 567.15 L1394.36 566.10 L1394.50 565.59 L1394.64 565.63 L1394.79 566.24 L1394.93 567.35 L1395.07 568.92 L1395.21 570.82 L1395.35 572.95 L1395.49 575.16 L1395.63 577.33 L1395.77 579.31 L1395.91 580.99 L1396.05 582.26 L1396.19 583.05 L1396.33 583.31 L1396.47 583.03 L1396.61 582.23 L1396.75 580.95 L1396.89 579.28 L1397.03 577.32 L1397.17 575.19 L1397.31 573.02 L1397.45 570.93 L1397.59 569.06 L1397.73 567.50 L1397.87 566.36 L1398.01 565.69 L1398.15 565.54 L1398.29 565.91 L1398.43 566.77 L1398.57 568.08 L1398.71 569.75 L1398.85 571.70 L1399.00 573.79 L1399.14 575.92 L1399.28 577.96 L1399.42 579.80 L1399.56 581.32 L1399.70 582.46 L1399.84 583.14 L1399.98 583.32 L1400.12 583.01 L1400.26 582.21 L1400.40 580.98 L1400.54 579.39 L1400.68 577.53 L1400.82 575.49 L1400.96 573.41 L1401.10 571.37 L1401.24 569.51 L1401.38 567.93 L1401.52 566.69 L1401.66 565.88 L1401.80 565.53 L1401.94 565.66 L1402.08 566.26 L1402.22 567.29 L1402.36 568.71 L1402.50 570.42 L1402.64 572.35 L1402.78 574.38 L1402.92 576.41 L1403.06 578.34 L1403.21 580.05 L1403.35 581.47 L1403.49 582.52 L1403.63 583.15 L1403.77 583.33 L1403.91 583.06 L1404.05 582.34 L1404.19 581.21 L1404.33 579.75 L1404.47 578.01 L1404.61 576.10 L1404.75 574.11 L1404.89 572.13 L1405.03 570.27 L1405.17 568.63 L1405.31 567.27 L1405.45 566.27 L1405.59 565.67 L1405.73 565.51 L1405.87 565.78 L1406.01 566.47 L1406.15 567.55 L1406.29 568.96 L1406.43 570.64 L1406.57 572.49 L1406.71 574.43 L1406.85 576.37 L1406.99 578.21 L1407.13 579.87 L1407.27 581.27 L1407.41 582.35 L1407.56 583.05 L1407.70 583.34 L1407.84 583.22 L1407.98 582.69 L1408.12 581.78 L1408.26 580.53 L1408.40 579.00 L1408.54 577.26 L1408.68 575.40 L1408.82 573.50 L1408.96 571.64 L1409.10 569.91 L1409.24 568.38 L1409.38 567.13 L1409.52 566.21 L1409.66 565.66 L1409.80 565.49 L1409.94 565.72 L1410.08 566.34 L1410.22 567.30 L1410.36 568.58 L1410.50 570.11 L1410.64 571.82 L1410.78 573.65 L1410.92 575.50 L1411.06 577.31 L1411.20 578.98 L1411.34 580.46 L1411.48 581.69 L1411.62 582.60 L1411.77 583.16 L1411.91 583.36 L1412.05 583.19 L1412.19 582.65 L1412.33 581.76 L1412.47 580.58 L1412.61 579.14 L1412.75 577.52 L1412.89 575.77 L1413.03 573.97 L1413.17 572.18 L1413.31 570.50 L1413.45 568.97 L1413.59 567.67 L1413.73 566.64" fill="none" stroke="#2169b0" stroke-width="1.05" stroke-linejoin="round"/>
<path d="M1239.1 619.6 L1244.0 619.6 L1249.3 621.5 L1254.2 619.6 L1256.5 590.1 L1258.7 590.8 L1261.0 591.8 L1263.6 592.7 L1265.8 593.7 L1271.4 595.8 L1288.8 602.5 L1306.7 609.4 L1321.9 615.2 L1341.3 622.5 L1346.8 590.4 L1366.8 598.2 L1394.2 608.8 L1413.8 616.2" fill="none" stroke="#6a2c91" stroke-width="1"/>
<rect x="1235.3" y="561.3" width="178.5" height="70" fill="none" stroke="#8f8f8f" stroke-width="1"/>
<circle cx="1221.4" cy="570" r="9.2" fill="#fff" stroke="#a9cdf0" stroke-width="0.9"/><path d="M1218.1000000000001 570 H1224.7" stroke="#1b4f9c" stroke-width="1.3"/><path d="M1221.4 566.7 V573.3" stroke="#1b4f9c" stroke-width="1.3"/>
<circle cx="1221.6" cy="623.8" r="9.2" fill="#fff" stroke="#a9cdf0" stroke-width="0.9"/><path d="M1218.3 623.8 H1224.8999999999999" stroke="#1b4f9c" stroke-width="1.3"/>
<path d="M1221.5 584 V604" stroke="#dcdcdc" stroke-width="2.4" stroke-linecap="round"/><circle cx="1221.5" cy="606.5" r="5.2" fill="#94c1ec"/>
<circle cx="1247.2" cy="645.3" r="9.2" fill="#fff" stroke="#a9cdf0" stroke-width="0.9"/><path d="M1243.9 645.3 H1250.5" stroke="#1b4f9c" stroke-width="1.3"/>
<circle cx="1406.3" cy="645.3" r="9.2" fill="#fff" stroke="#a9cdf0" stroke-width="0.9"/><path d="M1403.0 645.3 H1409.6" stroke="#1b4f9c" stroke-width="1.3"/><path d="M1406.3 642.0 V648.5999999999999" stroke="#1b4f9c" stroke-width="1.3"/>
<path d="M1266 645.3 H1391.5" stroke="#dcdcdc" stroke-width="2.4" stroke-linecap="round"/><circle cx="1264.7" cy="645.3" r="5.1" fill="#94c1ec"/>
<text x="1215" y="661" font-family="Liberation Sans" font-size="6.5" fill="#666">x1</text><text x="1215" y="671.6" font-family="Liberation Sans" font-size="6.5" fill="#666">x1</text>
<rect x="1253.5" y="656.5" width="61.6" height="14.8" rx="2.5" fill="#fff" stroke="#a9cdf0" stroke-width="0.9"/><path d="M1285.3 656.2 H1312.6 Q1315.5 656.2 1315.5 659 V668.8 Q1315.5 671.6 1312.6 671.6 H1285.3 Z" fill="#1b5ca8"/>
<g stroke="#1b4f9c" fill="none"><circle cx="1266.5" cy="662.2" r="3.1" stroke-width="1.1"/><path d="M1268.9 664.7 L1274.4 668.4" stroke-width="1.9"/><path d="M1264.9 662.2 H1268.1 M1266.5 660.6 V663.8" stroke-width="0.7"/></g>
<path transform="translate(0 -0.9)" d="M1297.6 670.3 L1294.2 665.6 Q1293.6 664.4 1294.7 664.2 Q1295.5 664.1 1296.3 665.2 L1297 666 V660.4 Q1297 659.5 1297.8 659.5 Q1298.6 659.5 1298.6 660.4 V659.4 Q1298.6 658.5 1299.5 658.5 Q1300.4 658.5 1300.4 659.4 V659.9 Q1300.4 659 1301.3 659 Q1302.2 659 1302.2 659.9 V660.9 Q1302.2 660.2 1303 660.2 Q1303.8 660.2 1303.8 661 V667 Q1303.8 669 1302.8 670.3 Z" fill="#fff"/>
<path d="M1333.3 662.2 L1339.2 658.3 L1339.3 660.4 C1345 659.6 1350.6 662 1352.6 667.2 L1351 667.6 C1348.5 664.2 1344 663.6 1339.4 664.4 L1339.5 666.8 Z" fill="#1b4f9c"/>
<text x="1357" y="669.3" font-family="Liberation Sans" font-size="15" font-weight="700" fill="#9a9a9a" textLength="21" lengthAdjust="spacingAndGlyphs">1:1</text>
<circle cx="1393.3" cy="663.7" r="5.4" fill="#fff" stroke="#7fb1e6" stroke-width="0.9"/><rect x="1392.75" y="662.7" width="1.1" height="3.8" fill="#1b4f9c"/><rect x="1392.75" y="660.6" width="1.1" height="1.2" fill="#1b4f9c"/>
</svg>
</body></html>
